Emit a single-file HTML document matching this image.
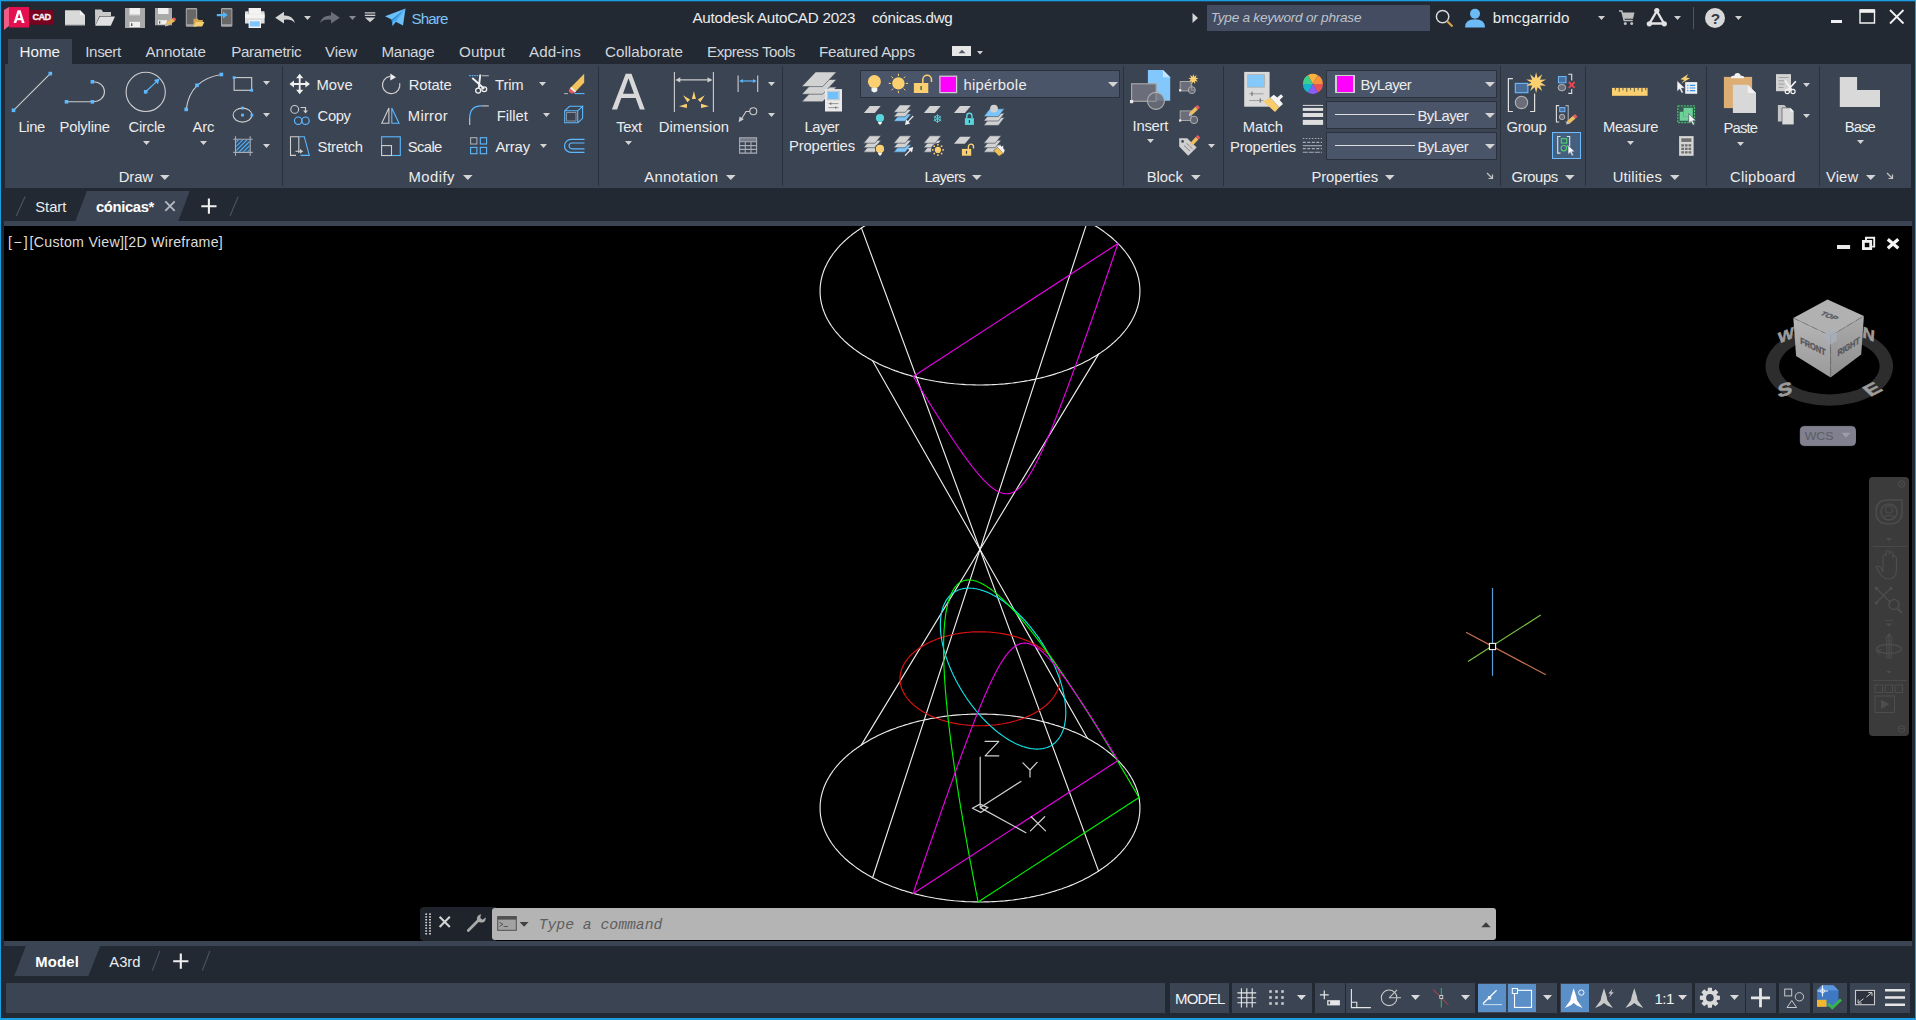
<!DOCTYPE html>
<html><head><meta charset="utf-8"><title>Autodesk AutoCAD 2023 - cónicas.dwg</title>
<style>
html,body{margin:0;padding:0;}
body{width:1916px;height:1020px;overflow:hidden;background:#222933;position:relative;font-family:"Liberation Sans",sans-serif;}
.t{position:absolute;white-space:pre;}
.b{position:absolute;display:block;overflow:visible;}
</style></head><body>

<div class="b" style="left:0px;top:0px;width:1916px;height:1px;background:#1a9ee0;"></div>
<div class="b" style="left:0px;top:1px;width:1916px;height:1px;background:#1f4a6c;"></div>
<div class="b" style="left:0px;top:0px;width:1px;height:1020px;background:#1a9ee0;"></div>
<div class="b" style="left:1915px;top:0px;width:1px;height:1020px;background:#1a9ee0;"></div>
<div class="b" style="left:0px;top:1018px;width:1916px;height:2px;background:#1a9ee0;"></div>
<svg class="b" style="left:3px;top:5px;" width="54" height="26" viewBox="0 0 54 26">
<path d="M1 5 L6 2 L6 21 L1 25Z" fill="#ee5d86"/>
<rect x="6" y="2" width="20" height="20.5" fill="#e51050"/>
<rect x="26" y="5" width="25" height="14.7" fill="#78021f"/>
<path d="M10.6 18 L14.6 5.3 H17.6 L21.6 18 H18.9 L18.1 15.2 H14.1 L13.3 18Z M14.7 13.1 H17.5 L16.1 8.2Z" fill="#fff"/>
</svg>
<div class="t" style="left:32.50px;top:12.00px;line-height:11px;font-size:9.2px;letter-spacing:-0.644px;color:#f6eef0;font-weight:bold;font-style:normal;font-family:'Liberation Sans', sans-serif;-webkit-text-stroke:0.35px #f6eef0;">CAD</div>
<svg class="b" style="left:64px;top:9px;" width="22" height="18" viewBox="0 0 22 18"><path d="M1 1.2 H16 L21 6.2 V16.3 H1Z" fill="#d9d9d9"/><path d="M16 1.2 V6.2 H21Z" fill="#f4f4f4"/><path d="M1 15.3H21V16.3H1Z" fill="#b5b5b5"/></svg>
<svg class="b" style="left:94px;top:8px;" width="22" height="19" viewBox="0 0 22 19"><path d="M1 1.5 H7.5 L9 4 H17 V8 H5.5 L1.2 17.5Z" fill="#c9c9c9"/><path d="M5.8 8.6 H21 L16.8 17.8 H1.2Z" fill="#e0e0e0"/></svg>
<svg class="b" style="left:124px;top:7px;" width="22" height="22" viewBox="0 0 22 22"><path d="M1 1H21V21H1Z" fill="#a9a9a9"/><rect x="5.5" y="1" width="10.5" height="7.2" fill="#f0f0f0"/><rect x="5.5" y="7.2" width="10.5" height="1" fill="#d0d0d0"/><rect x="5.5" y="14.8" width="10.5" height="5.2" fill="#efefef"/><rect x="7" y="16.3" width="1.4" height="2.7" fill="#555"/></svg>
<svg class="b" style="left:154px;top:7px;" width="23" height="22" viewBox="0 0 23 22"><path d="M1 1H18V18.3H1Z" fill="#a9a9a9"/><rect x="4" y="1" width="10.5" height="6" fill="#f0f0f0"/><rect x="4" y="13.2" width="9" height="4.2" fill="#efefef"/><rect x="5" y="14.3" width="1.3" height="2.3" fill="#555"/><path d="M11.2 19.2 L12.2 15.6 L18.6 11.3 L21.2 13.9 L14.7 18.2Z" fill="#e9b85c"/><path d="M18.2 11.6 L19.6 10.6 Q21.5 10.3 22 12.6 L21 13.9Z" fill="#ee5b5b"/><path d="M11 19.5 L12.1 16 L14.4 18.4Z" fill="#bdbdbd"/></svg>
<svg class="b" style="left:185px;top:7px;" width="21" height="22" viewBox="0 0 21 22"><rect x="0.8" y="1" width="11.4" height="18.8" rx="1.3" fill="#a5a5a5"/><rect x="1.8" y="2.4" width="9.4" height="14.8" fill="#686868"/><path d="M8.5 11.8 H12.8 L13.8 13 H17.8 V15 H10.5 L8.5 19.3Z" fill="#d6a84e"/><path d="M10.5 15 H19.3 L17.2 19.6 H8.4Z" fill="#f5cf74"/></svg>
<svg class="b" style="left:216px;top:7px;" width="18" height="22" viewBox="0 0 18 22"><rect x="5" y="1" width="11.4" height="18.8" rx="1.3" fill="#a5a5a5"/><rect x="6" y="2.4" width="9.4" height="14.8" fill="#686868"/><path d="M0.8 7 H7 V4.6 L11.8 8.1 L7 11.6 V9.2 H0.8Z" fill="#55b4f5"/></svg>
<svg class="b" style="left:244px;top:7px;" width="22" height="22" viewBox="0 0 22 22"><rect x="4.6" y="1" width="12.4" height="6" fill="#f2f2f2"/><path d="M1 5.2 Q1 4.2 2 4.2 H4.6 V7H17V4.2H19.6 Q20.6 4.200 20.6 5.2 V16.6 H1Z" fill="#dcdcdc"/><rect x="1" y="7.2" width="19.600" height="4" fill="#f3f3f3"/><rect x="4.6" y="13" width="12.4" height="8" fill="#f2f2f2"/><rect x="5.8" y="14.3" width="10" height="5.200" fill="#7fc4fa"/></svg>
<svg class="b" style="left:274px;top:10px;" width="23" height="15" viewBox="0 0 23 15"><path d="M1.2 7.7 L10 1.8 V5.6 Q18.5 5.2 21 13 Q17 8.6 10 9.8 V13.600Z" fill="#d4d4d4"/></svg>
<svg class="b" style="left:303.7px;top:15.8px;" width="7" height="4" viewBox="0 0 7 4"><path d="M0 0H7L3.5 4Z" fill="#cfcfcf"/></svg>
<svg class="b" style="left:318px;top:10px;" width="23" height="15" viewBox="0 0 23 15"><path d="M21.800 7.7 L13 1.8 V5.6 Q4.5 5.2 2 13 Q6 8.6 13 9.8 V13.600Z" fill="#6a6e79"/></svg>
<svg class="b" style="left:348.6px;top:15.8px;" width="7" height="4" viewBox="0 0 7 4"><path d="M0 0H7L3.5 4Z" fill="#858993"/></svg>
<svg class="b" style="left:364px;top:11px;" width="12" height="12" viewBox="0 0 12 12"><rect x="0.8" y="1.3" width="10.500" height="1.200" fill="#cfcfcf"/><rect x="0.8" y="3.700" width="10.500" height="1.300" fill="#cfcfcf"/><path d="M0.8 6.500 H11.300 L6.050 11.300Z" fill="#cfcfcf"/></svg>
<svg class="b" style="left:384px;top:7px;" width="23" height="20" viewBox="0 0 23 20"><path d="M1 9.3 L21.500 1.500 L19 18.500 L11.800 14.800 L8.600 19 L7.600 12.600Z" fill="#6cc0fa"/><path d="M7.600 12.600 L21.500 1.500 L9.300 14 L8.600 19Z" fill="#2f8fd6"/><path d="M9.300 14 L21.500 1.500 L11.800 14.800Z" fill="#4aa9ec"/></svg>
<div class="t" style="left:411.40px;top:9.50px;line-height:18px;font-size:15.2px;letter-spacing:-0.852px;color:#7cc3f7;font-weight:normal;font-style:normal;font-family:'Liberation Sans', sans-serif;">Share</div>
<div class="t" style="left:692.40px;top:9.20px;line-height:18px;font-size:15.2px;letter-spacing:-0.246px;color:#ececec;font-weight:normal;font-style:normal;font-family:'Liberation Sans', sans-serif;">Autodesk AutoCAD 2023</div>
<div class="t" style="left:872.00px;top:9.20px;line-height:18px;font-size:15.2px;letter-spacing:-0.277px;color:#ececec;font-weight:normal;font-style:normal;font-family:'Liberation Sans', sans-serif;">cónicas.dwg</div>
<svg class="b" style="left:1191px;top:12px;" width="8" height="12" viewBox="0 0 8 12"><path d="M1.5 1 L7 6 L1.5 11Z" fill="#d6d6d6"/></svg>
<div class="b" style="left:1207px;top:5px;width:223px;height:26px;background:#434c60;"></div>
<div class="t" style="left:1210.70px;top:10.20px;line-height:16px;font-size:13.6px;letter-spacing:-0.234px;color:#bfc3cb;font-weight:normal;font-style:italic;font-family:'Liberation Sans', sans-serif;">Type a keyword or phrase</div>
<svg class="b" style="left:1434px;top:8px;" width="20" height="20" viewBox="0 0 20 20"><circle cx="8.6" cy="8.6" r="6.2" fill="none" stroke="#dadada" stroke-width="1.500"/><path d="M13 13 L18.500 18.500" stroke="#d9a04c" stroke-width="2.200"/></svg>
<svg class="b" style="left:1464px;top:7px;" width="22" height="21" viewBox="0 0 22 21"><circle cx="11" cy="6.8" r="5" fill="#6cbbf7"/><path d="M1 20.500 Q1 12.300 11 12.300 Q21 12.300 21 20.500Z" fill="#6cbbf7"/></svg>
<div class="t" style="left:1492.70px;top:9.40px;line-height:18px;font-size:15.2px;letter-spacing:0.087px;color:#ececec;font-weight:normal;font-style:normal;font-family:'Liberation Sans', sans-serif;">bmcgarrido</div>
<svg class="b" style="left:1597.5px;top:15.600000000000001px;" width="7" height="4" viewBox="0 0 7 4"><path d="M0 0H7L3.5 4Z" fill="#cfcfcf"/></svg>
<svg class="b" style="left:1618px;top:9px;" width="18" height="18" viewBox="0 0 18 18"><path d="M1 2 H3.800 L6.200 11.500 H14.800" fill="none" stroke="#bdbdbd" stroke-width="1.500"/><path d="M4.300 3.500 H16.500 L15 9.800 H6Z" fill="#bdbdbd"/><circle cx="7.300" cy="14.600" r="1.500" fill="#bdbdbd"/><circle cx="13.700" cy="14.600" r="1.500" fill="#bdbdbd"/></svg>
<svg class="b" style="left:1646px;top:7px;" width="22" height="21" viewBox="0 0 22 21"><path d="M10.800 4 L3.500 16.500 H18 Z" fill="none" stroke="#e2e2e2" stroke-width="2.400" stroke-linejoin="round"/><circle cx="10.800" cy="3.600" r="2.600" fill="#e2e2e2"/><circle cx="3.300" cy="16.800" r="2.600" fill="#e2e2e2"/><circle cx="18.300" cy="16.800" r="2.600" fill="#e2e2e2"/></svg>
<svg class="b" style="left:1673.5px;top:15.600000000000001px;" width="7" height="4" viewBox="0 0 7 4"><path d="M0 0H7L3.5 4Z" fill="#cfcfcf"/></svg>
<div class="b" style="left:1693px;top:7px;width:1px;height:22px;background:#4d5566;"></div>
<svg class="b" style="left:1704px;top:7px;" width="22" height="22" viewBox="0 0 22 22"><circle cx="11" cy="11" r="10" fill="#d8d8d8"/></svg>
<div class="t" style="left:1710.80px;top:9.10px;line-height:19px;font-size:15.5px;letter-spacing:-1.068px;color:#333a46;font-weight:bold;font-style:normal;font-family:'Liberation Sans', sans-serif;">?</div>
<svg class="b" style="left:1734.5px;top:15.600000000000001px;" width="7" height="4" viewBox="0 0 7 4"><path d="M0 0H7L3.5 4Z" fill="#cfcfcf"/></svg>
<div class="b" style="left:1831px;top:20px;width:11px;height:3px;background:#f0f0f0;"></div>
<svg class="b" style="left:1859px;top:8px;" width="18" height="17" viewBox="0 0 18 17"><path d="M1 4 V15 H15.500 V4Z M1 2 H15.500" fill="none" stroke="#f0f0f0" stroke-width="1.400"/><rect x="0.300" y="1.300" width="15.900" height="2.900" fill="#f0f0f0"/></svg>
<svg class="b" style="left:1888px;top:8px;" width="18" height="18" viewBox="0 0 18 18"><path d="M2 2 L15.500 15.500 M15.500 2 L2 15.500" stroke="#f0f0f0" stroke-width="1.800"/></svg>
<div class="b" style="left:8px;top:39px;width:64px;height:26px;background:#3b4453;"></div>
<div class="t" style="left:19.60px;top:42.60px;line-height:18px;font-size:15.2px;letter-spacing:-0.037px;color:#f2f2f2;font-weight:normal;font-style:normal;font-family:'Liberation Sans', sans-serif;">Home</div>
<div class="t" style="left:85.30px;top:42.60px;line-height:18px;font-size:15.2px;letter-spacing:-0.419px;color:#d2d5da;font-weight:normal;font-style:normal;font-family:'Liberation Sans', sans-serif;">Insert</div>
<div class="t" style="left:145.40px;top:42.60px;line-height:18px;font-size:15.2px;letter-spacing:-0.032px;color:#d2d5da;font-weight:normal;font-style:normal;font-family:'Liberation Sans', sans-serif;">Annotate</div>
<div class="t" style="left:231.20px;top:42.60px;line-height:18px;font-size:15.2px;letter-spacing:-0.328px;color:#d2d5da;font-weight:normal;font-style:normal;font-family:'Liberation Sans', sans-serif;">Parametric</div>
<div class="t" style="left:325.00px;top:42.60px;line-height:18px;font-size:15.2px;letter-spacing:-0.168px;color:#d2d5da;font-weight:normal;font-style:normal;font-family:'Liberation Sans', sans-serif;">View</div>
<div class="t" style="left:381.50px;top:42.60px;line-height:18px;font-size:15.2px;letter-spacing:-0.322px;color:#d2d5da;font-weight:normal;font-style:normal;font-family:'Liberation Sans', sans-serif;">Manage</div>
<div class="t" style="left:459.00px;top:42.60px;line-height:18px;font-size:15.2px;letter-spacing:0.062px;color:#d2d5da;font-weight:normal;font-style:normal;font-family:'Liberation Sans', sans-serif;">Output</div>
<div class="t" style="left:529.00px;top:42.60px;line-height:18px;font-size:15.2px;letter-spacing:0.066px;color:#d2d5da;font-weight:normal;font-style:normal;font-family:'Liberation Sans', sans-serif;">Add-ins</div>
<div class="t" style="left:605.00px;top:42.60px;line-height:18px;font-size:15.2px;letter-spacing:0.024px;color:#d2d5da;font-weight:normal;font-style:normal;font-family:'Liberation Sans', sans-serif;">Collaborate</div>
<div class="t" style="left:707.00px;top:42.60px;line-height:18px;font-size:15.2px;letter-spacing:-0.488px;color:#d2d5da;font-weight:normal;font-style:normal;font-family:'Liberation Sans', sans-serif;">Express Tools</div>
<div class="t" style="left:819.00px;top:42.60px;line-height:18px;font-size:15.2px;letter-spacing:-0.221px;color:#d2d5da;font-weight:normal;font-style:normal;font-family:'Liberation Sans', sans-serif;">Featured Apps</div>
<div class="b" style="left:952px;top:46px;width:19px;height:10px;background:#e6e6e6;"></div>
<svg class="b" style="left:958px;top:49px;" width="8" height="5" viewBox="0 0 8 5"><path d="M0.500 4.300 L4 0.800 L7.500 4.300Z" fill="#555b66"/></svg>
<svg class="b" style="left:977.0px;top:50.55px;" width="6" height="3.5" viewBox="0 0 6 3.5"><path d="M0 0H6L3.0 3.5Z" fill="#cfcfcf"/></svg>
<div class="b" style="left:5px;top:64px;width:1906px;height:124px;background:#3b4453;"></div>
<div class="b" style="left:281.9px;top:66px;width:1.2px;height:120px;background:#2a313d;"></div>
<div class="b" style="left:597.9px;top:66px;width:1.2px;height:120px;background:#2a313d;"></div>
<div class="b" style="left:781.9px;top:66px;width:1.2px;height:120px;background:#2a313d;"></div>
<div class="b" style="left:1122.8000000000002px;top:66px;width:1.2px;height:120px;background:#2a313d;"></div>
<div class="b" style="left:1223.1000000000001px;top:66px;width:1.2px;height:120px;background:#2a313d;"></div>
<div class="b" style="left:1500.2px;top:66px;width:1.2px;height:120px;background:#2a313d;"></div>
<div class="b" style="left:1584.9px;top:66px;width:1.2px;height:120px;background:#2a313d;"></div>
<div class="b" style="left:1705.8000000000002px;top:66px;width:1.2px;height:120px;background:#2a313d;"></div>
<div class="b" style="left:1819.0px;top:66px;width:1.2px;height:120px;background:#2a313d;"></div>
<svg class="b" style="left:0px;top:0px;" width="300" height="170" viewBox="0 0 300 170"><path d="M13.500 110.300 L50.300 73.600" stroke="#cdcdcd" stroke-width="1.100" fill="none"/><rect x="11.70" y="108.50" width="3.6" height="3.6" fill="#5cb8ff"/><rect x="48.50" y="71.80" width="3.6" height="3.6" fill="#5cb8ff"/><path d="M66.500 101.800 H92.400 M92.400 101.800 C108.500 101.800 108.500 81.800 92.400 81.800" stroke="#cdcdcd" stroke-width="1.100" fill="none"/><rect x="64.70" y="100.00" width="3.6" height="3.6" fill="#5cb8ff"/><rect x="90.60" y="100.00" width="3.6" height="3.6" fill="#5cb8ff"/><rect x="90.60" y="80.00" width="3.6" height="3.6" fill="#5cb8ff"/><circle cx="145.700" cy="91.900" r="19.600" stroke="#cdcdcd" stroke-width="1.100" fill="none"/><path d="M145.700 91.800 L156.500 81.600" stroke="#5cb8ff" stroke-width="1.200"/><path d="M159.500 78.500 L158 84.300 L153.800 80.100Z" fill="#5cb8ff"/><rect x="143.90" y="90.00" width="3.6" height="3.6" fill="#5cb8ff"/><path d="M186.200 109.400 Q190 79.500 221.400 74.500" stroke="#cdcdcd" stroke-width="1.100" fill="none"/><rect x="184.40" y="107.60" width="3.6" height="3.6" fill="#5cb8ff"/><rect x="195.20" y="83.50" width="3.6" height="3.6" fill="#5cb8ff"/><rect x="219.60" y="72.70" width="3.6" height="3.6" fill="#5cb8ff"/><rect x="234.100" y="77.600" width="17.600" height="12.700" stroke="#cdcdcd" stroke-width="1.100" fill="none"/><rect x="232.70" y="76.20" width="2.8" height="2.8" fill="#5cb8ff"/><rect x="250.30" y="88.90" width="2.8" height="2.8" fill="#5cb8ff"/><ellipse cx="242.500" cy="115.100" rx="9.400" ry="7" stroke="#cdcdcd" stroke-width="1.100" fill="none"/><rect x="241.10" y="106.70" width="2.8" height="2.8" fill="#5cb8ff"/><rect x="241.10" y="113.70" width="2.8" height="2.8" fill="#5cb8ff"/><rect x="250.50" y="113.70" width="2.8" height="2.8" fill="#5cb8ff"/><defs><pattern id="hp" width="3" height="3" patternUnits="userSpaceOnUse" patternTransform="rotate(-45)"><rect width="3" height="3" fill="#34506f"/><rect width="3" height="1" fill="#5cb8ff"/></pattern></defs><rect x="236.200" y="140" width="13.300" height="11.700" fill="url(#hp)"/><path d="M235.500 136.300 V155.800 M250.200 136.300 V155.800 M233.300 139.300 H252.700 M233.300 152.400 H252.700" stroke="#a9adb5" stroke-width="1.100" fill="none"/></svg>
<svg class="b" style="left:262.6px;top:81.4px;" width="7" height="4" viewBox="0 0 7 4"><path d="M0 0H7L3.5 4Z" fill="#d4d4d4"/></svg>
<svg class="b" style="left:262.6px;top:112.7px;" width="7" height="4" viewBox="0 0 7 4"><path d="M0 0H7L3.5 4Z" fill="#d4d4d4"/></svg>
<svg class="b" style="left:262.6px;top:143.5px;" width="7" height="4" viewBox="0 0 7 4"><path d="M0 0H7L3.5 4Z" fill="#d4d4d4"/></svg>
<div class="t" style="left:18.60px;top:117.87px;line-height:18px;font-size:14.8px;letter-spacing:-0.470px;color:#ececec;font-weight:normal;font-style:normal;font-family:'Liberation Sans', sans-serif;">Line</div>
<div class="t" style="left:59.50px;top:117.87px;line-height:18px;font-size:14.8px;letter-spacing:-0.179px;color:#ececec;font-weight:normal;font-style:normal;font-family:'Liberation Sans', sans-serif;">Polyline</div>
<div class="t" style="left:128.50px;top:117.87px;line-height:18px;font-size:14.8px;letter-spacing:-0.221px;color:#ececec;font-weight:normal;font-style:normal;font-family:'Liberation Sans', sans-serif;">Circle</div>
<div class="t" style="left:192.50px;top:117.87px;line-height:18px;font-size:14.8px;letter-spacing:-0.133px;color:#ececec;font-weight:normal;font-style:normal;font-family:'Liberation Sans', sans-serif;">Arc</div>
<svg class="b" style="left:142.5px;top:140.9px;" width="7" height="4" viewBox="0 0 7 4"><path d="M0 0H7L3.5 4Z" fill="#d4d4d4"/></svg>
<svg class="b" style="left:199.5px;top:140.9px;" width="7" height="4" viewBox="0 0 7 4"><path d="M0 0H7L3.5 4Z" fill="#d4d4d4"/></svg>
<div class="t" style="left:118.80px;top:167.87px;line-height:18px;font-size:14.8px;letter-spacing:-0.109px;color:#ececec;font-weight:normal;font-style:normal;font-family:'Liberation Sans', sans-serif;">Draw</div>
<svg class="b" style="left:160.2px;top:174.9px;" width="9.6" height="5" viewBox="0 0 9.6 5"><path d="M0 0H9.6L4.8 5Z" fill="#d4d4d4"/></svg>
<svg class="b" style="left:0px;top:0px;" width="600" height="170" viewBox="0 0 600 170"><path d="M299.700 75.500 V92.500 M291.200 84 H308.200" stroke="#f0f0f0" stroke-width="1.800"/><path d="M299.700 73.700 L303.300 78.300 H296.100Z M299.700 94.300 L303.300 89.700 H296.100Z M289.400 84 L294 80.400 V87.600Z M310 84 L305.400 80.400 V87.600Z" fill="#f0f0f0"/><circle cx="294.700" cy="109.400" r="3.900" stroke="#cdcdcd" stroke-width="1.100" fill="none"/><path d="M300.500 107.500 H305.500 V111" stroke="#cdcdcd" stroke-width="1.200" fill="none"/><path d="M303 110.500 H308 L305.500 113.600Z" fill="#cdcdcd"/><circle cx="298.200" cy="120.700" r="3.700" stroke="#5cb8ff" stroke-width="1.200" fill="none"/><circle cx="305.500" cy="120.700" r="3.700" stroke="#5cb8ff" stroke-width="1.200" fill="none"/><path d="M298.800 153 V136.700 H290.500 V155.400 H296" stroke="#cdcdcd" stroke-width="1.100" fill="none"/><path d="M298.800 136.700 H304.300 L309.300 155.400 H300.500" stroke="#5cb8ff" stroke-width="1.100" fill="none"/><path d="M295.500 151.300 H300.500" stroke="#cdcdcd" stroke-width="1.100"/><path d="M300 148.900 L303.200 151.300 L300 153.700Z" fill="#cdcdcd"/><path d="M389.900 76.300 A8.700 8.700 0 1 0 399.700 83.200" stroke="#cdcdcd" stroke-width="1.200" fill="none"/><path d="M390.300 73.600 L396 77.300 L390.300 80.600Z" fill="#f0f0f0"/><path d="M388.900 108 V123.200 H381.800Z" stroke="#cdcdcd" stroke-width="1.100" fill="none"/><path d="M391.800 108 V123.200 H399Z" stroke="#5cb8ff" stroke-width="1.100" fill="none"/><rect x="381.600" y="136.800" width="18.700" height="18.700" stroke="#5cb8ff" stroke-width="1.100" fill="none"/><rect x="381.600" y="145.600" width="9.900" height="9.900" stroke="#cdcdcd" stroke-width="1.100" fill="#3b4453"/><path d="M469.200 75.700 H478.500" stroke="#5cb8ff" stroke-width="1.200" stroke-dasharray="1.500 1"/><path d="M482 75.700 H488.800" stroke="#a9adb5" stroke-width="1.200"/><path d="M480.300 74.500 L478.800 88 M472.300 78 L484.200 88.800" stroke="#f0f0f0" stroke-width="1.900" fill="none"/><circle cx="478.200" cy="90.600" r="2.500" stroke="#f0f0f0" stroke-width="1.300" fill="none"/><circle cx="484.300" cy="89.300" r="2.400" stroke="#f0f0f0" stroke-width="1.300" fill="none"/><path d="M469.700 125 V118" stroke="#cdcdcd" stroke-width="1.100"/><path d="M469.700 118 Q469.700 105.900 481.500 105.900" stroke="#5cb8ff" stroke-width="1.200" fill="none"/><path d="M481.500 105.900 H488.800" stroke="#cdcdcd" stroke-width="1.100"/><rect x="470.600" y="137.700" width="6.300" height="6.300" stroke="#a9adb5" stroke-width="1.100" fill="none"/><rect x="480.300" y="137.700" width="6.300" height="6.300" stroke="#5cb8ff" stroke-width="1.100" fill="none"/><rect x="470.600" y="147.400" width="6.300" height="6.300" stroke="#5cb8ff" stroke-width="1.100" fill="none"/><rect x="480.300" y="147.400" width="6.300" height="6.300" stroke="#5cb8ff" stroke-width="1.100" fill="none"/><path d="M570 88.300 L584.200 73.700 V82.500 L574.800 92.500Z" fill="#f2c25f"/><path d="M570 88.300 L574.800 92.500 L572.800 93.600 Q569 93.300 568.700 90Z" fill="#ee5a60"/><path d="M571.300 87 L576 91.200 L574.800 92.500 L570 88.300Z" fill="#f3f3f3"/><path d="M564.100 93.600 H568" stroke="#a9adb5" stroke-width="1.100"/><path d="M574.500 93.600 H584.500" stroke="#5cb8ff" stroke-width="1.100"/><path d="M564.700 110.800 H577.700 V122.800 H564.700Z M564.700 110.800 L569.500 106.300 H582.600 L577.700 110.800 M582.600 106.300 V118.300 L577.700 122.800" stroke="#5cb8ff" stroke-width="1.100" fill="none"/><path d="M566.500 112.500 H576 V121 H566.500Z" stroke="#8a909c" stroke-width="1" fill="none"/><path d="M584.500 139.400 H571 A6.500 6.500 0 0 0 571 152.400 H584.500 M584.500 143 H572 A2.900 2.900 0 0 0 572 148.800 H584.500" stroke="#5cb8ff" stroke-width="1.200" fill="none"/></svg>
<div class="t" style="left:316.40px;top:75.77px;line-height:18px;font-size:14.8px;letter-spacing:0.052px;color:#ececec;font-weight:normal;font-style:normal;font-family:'Liberation Sans', sans-serif;">Move</div>
<div class="t" style="left:317.60px;top:106.67px;line-height:18px;font-size:14.8px;letter-spacing:-0.388px;color:#ececec;font-weight:normal;font-style:normal;font-family:'Liberation Sans', sans-serif;">Copy</div>
<div class="t" style="left:317.60px;top:137.57px;line-height:18px;font-size:14.8px;letter-spacing:-0.241px;color:#ececec;font-weight:normal;font-style:normal;font-family:'Liberation Sans', sans-serif;">Stretch</div>
<div class="t" style="left:408.80px;top:75.77px;line-height:18px;font-size:14.8px;letter-spacing:-0.118px;color:#ececec;font-weight:normal;font-style:normal;font-family:'Liberation Sans', sans-serif;">Rotate</div>
<div class="t" style="left:407.80px;top:106.67px;line-height:18px;font-size:14.8px;letter-spacing:0.261px;color:#ececec;font-weight:normal;font-style:normal;font-family:'Liberation Sans', sans-serif;">Mirror</div>
<div class="t" style="left:407.80px;top:137.57px;line-height:18px;font-size:14.8px;letter-spacing:-0.624px;color:#ececec;font-weight:normal;font-style:normal;font-family:'Liberation Sans', sans-serif;">Scale</div>
<div class="t" style="left:495.10px;top:75.77px;line-height:18px;font-size:14.8px;letter-spacing:-0.159px;color:#ececec;font-weight:normal;font-style:normal;font-family:'Liberation Sans', sans-serif;">Trim</div>
<div class="t" style="left:496.80px;top:106.67px;line-height:18px;font-size:14.8px;letter-spacing:-0.058px;color:#ececec;font-weight:normal;font-style:normal;font-family:'Liberation Sans', sans-serif;">Fillet</div>
<div class="t" style="left:495.40px;top:137.57px;line-height:18px;font-size:14.8px;letter-spacing:-0.172px;color:#ececec;font-weight:normal;font-style:normal;font-family:'Liberation Sans', sans-serif;">Array</div>
<svg class="b" style="left:538.5px;top:82.0px;" width="7" height="4" viewBox="0 0 7 4"><path d="M0 0H7L3.5 4Z" fill="#d4d4d4"/></svg>
<svg class="b" style="left:542.5px;top:112.6px;" width="7" height="4" viewBox="0 0 7 4"><path d="M0 0H7L3.5 4Z" fill="#d4d4d4"/></svg>
<svg class="b" style="left:540.4px;top:143.8px;" width="7" height="4" viewBox="0 0 7 4"><path d="M0 0H7L3.5 4Z" fill="#d4d4d4"/></svg>
<div class="t" style="left:408.50px;top:167.87px;line-height:18px;font-size:14.8px;letter-spacing:0.468px;color:#ececec;font-weight:normal;font-style:normal;font-family:'Liberation Sans', sans-serif;">Modify</div>
<svg class="b" style="left:462.59999999999997px;top:174.9px;" width="9.6" height="5" viewBox="0 0 9.6 5"><path d="M0 0H9.6L4.8 5Z" fill="#d4d4d4"/></svg>
<svg class="b" style="left:0px;top:0px;" width="900" height="170" viewBox="0 0 900 170"><path d="M611.900 109.500 L625.700 73.800 H631.500 L644.800 109.500 H639.900 L635.700 97.900 H621.300 L617.100 109.500Z M628.500 78.300 L623 93.700 H634Z" fill="#d8d8d8" fill-rule="evenodd"/><path d="M674.400 72.100 V111.900 M713.400 72.100 V111.900 M677 79.900 H711" stroke="#cdcdcd" stroke-width="1.100" fill="none"/><path d="M675.300 79.900 L680.300 77.300 V82.500Z M712.500 79.900 L707.500 77.300 V82.500Z" fill="#cdcdcd"/><path d="M693.900 91 L695.900 99 H691.900Z M683 95.300 L690 99.500 L687.500 102.200Z M704.800 95.300 L697.800 99.500 L700.300 102.200Z M679 106.200 L686.900 103.700 V108Z M709 106.200 L701 103.700 V108Z" fill="#fbd071"/><path d="M738.100 75.500 V92.100 M757.700 75.500 V92.100" stroke="#cdcdcd" stroke-width="1.100"/><path d="M741 81 H755" stroke="#5cb8ff" stroke-width="1.200"/><path d="M739.300 81 L742.800 79 V83Z M756.500 81 L753 79 V83Z" fill="#5cb8ff"/><circle cx="753.300" cy="111.200" r="3.500" stroke="#cdcdcd" stroke-width="1.100" fill="none"/><path d="M749.800 111.500 H746 L741.500 119" stroke="#cdcdcd" stroke-width="1.100" fill="none"/><path d="M738.600 122.300 L739.600 116.600 L743.800 119.200Z" fill="#cdcdcd"/><path d="M739.600 137.800 H756.600 V153.100 H739.600Z M739.600 141.800 H756.600 M739.600 145.600 H756.600 M739.600 149.400 H756.600 M745.300 141.800 V153.100 M751 141.800 V153.100" stroke="#a9adb5" stroke-width="1.100" fill="none"/><rect x="739.600" y="137.800" width="17" height="4" fill="#a9adb5" opacity="0.550"/><path d="M801.80 101.80 L815.60 87.10 H836.50 L822.70 101.80Z" fill="#d2d2d2" stroke="#3b4453" stroke-width="0.600"/><path d="M801.80 94.20 L815.60 79.50 H836.50 L822.70 94.20Z" fill="#d2d2d2" stroke="#3b4453" stroke-width="0.600"/><path d="M801.80 86.60 L815.60 71.90 H836.50 L822.70 86.60Z" fill="#d2d2d2" stroke="#3b4453" stroke-width="0.600"/><rect x="825" y="89.100" width="17" height="22.400" fill="#e9e9e9"/><rect x="828" y="91.800" width="10.500" height="7.300" fill="#6fc0fb"/><rect x="827.300" y="91.100" width="11.900" height="8.700" fill="none" stroke="#b9b9b9" stroke-width="0.800"/><path d="M828.500 103.600 H838.500 M828.500 107.600 H838.500" stroke="#8e8e8e" stroke-width="0.900"/><path d="M830.800 102.400 V104.800 M835.800 106.400 V108.800" stroke="#6e6e6e" stroke-width="1.100"/></svg>
<div class="t" style="left:616.30px;top:117.87px;line-height:18px;font-size:14.8px;letter-spacing:-0.411px;color:#ececec;font-weight:normal;font-style:normal;font-family:'Liberation Sans', sans-serif;">Text</div>
<svg class="b" style="left:624.7px;top:140.7px;" width="7" height="4" viewBox="0 0 7 4"><path d="M0 0H7L3.5 4Z" fill="#d4d4d4"/></svg>
<div class="t" style="left:658.80px;top:117.67px;line-height:18px;font-size:14.8px;letter-spacing:0.020px;color:#ececec;font-weight:normal;font-style:normal;font-family:'Liberation Sans', sans-serif;">Dimension</div>
<svg class="b" style="left:767.5px;top:81.7px;" width="7" height="4" viewBox="0 0 7 4"><path d="M0 0H7L3.5 4Z" fill="#d4d4d4"/></svg>
<svg class="b" style="left:767.5px;top:112.6px;" width="7" height="4" viewBox="0 0 7 4"><path d="M0 0H7L3.5 4Z" fill="#d4d4d4"/></svg>
<div class="t" style="left:644.30px;top:167.87px;line-height:18px;font-size:14.8px;letter-spacing:0.313px;color:#ececec;font-weight:normal;font-style:normal;font-family:'Liberation Sans', sans-serif;">Annotation</div>
<svg class="b" style="left:725.9000000000001px;top:174.9px;" width="9.6" height="5" viewBox="0 0 9.6 5"><path d="M0 0H9.6L4.8 5Z" fill="#d4d4d4"/></svg>
<div class="t" style="left:804.60px;top:117.67px;line-height:18px;font-size:14.8px;letter-spacing:-0.564px;color:#ececec;font-weight:normal;font-style:normal;font-family:'Liberation Sans', sans-serif;">Layer</div>
<div class="t" style="left:789.00px;top:137.47px;line-height:18px;font-size:14.8px;letter-spacing:-0.155px;color:#ececec;font-weight:normal;font-style:normal;font-family:'Liberation Sans', sans-serif;">Properties</div>
<div class="b" style="left:860px;top:70px;width:260px;height:28px;background:#2b323e;"></div>
<div class="b" style="left:861px;top:71px;width:258px;height:26px;background:#4b556a;"></div>
<svg class="b" style="left:0px;top:0px;" width="1130" height="170" viewBox="0 0 1130 170"><circle cx="874.4" cy="81.6" r="6.5" fill="#fbd071"/><path d="M871.48 87.77 H877.32 V91.02 Q874.40 93.95 871.48 91.02Z" fill="#f2f2f2"/><circle cx="898.4" cy="83.4" r="6.2" fill="#fbd071"/><path d="M905.80 83.40 L908.10 83.40" stroke="#fbd071" stroke-width="1.0"/><path d="M903.63 88.63 L905.26 90.26" stroke="#fbd071" stroke-width="1.0"/><path d="M898.40 90.80 L898.40 93.10" stroke="#fbd071" stroke-width="1.0"/><path d="M893.17 88.63 L891.54 90.26" stroke="#fbd071" stroke-width="1.0"/><path d="M891.00 83.40 L888.70 83.40" stroke="#fbd071" stroke-width="1.0"/><path d="M893.17 78.17 L891.54 76.54" stroke="#fbd071" stroke-width="1.0"/><path d="M898.40 76.00 L898.40 73.70" stroke="#fbd071" stroke-width="1.0"/><path d="M903.63 78.17 L905.26 76.54" stroke="#fbd071" stroke-width="1.0"/><path d="M922.83 83.00 V79.50 A4.32 4.32 0 0 1 931.47 79.50 V82.00" stroke="#fbd071" stroke-width="1.500" fill="none"/><rect x="913.9" y="83" width="14.4" height="10" fill="#fbd071"/><rect x="920.50" y="86.00" width="1.200" height="4.00" fill="#3b4453"/><rect x="939.300" y="75.600" width="17.900" height="17.600" fill="#d0d0d0"/><rect x="940.500" y="76.800" width="15.500" height="15.200" fill="#ff00ff"/><path d="M863.90 112.90 L869.80 105.90 H880.70 L874.80 112.90Z" fill="#d2d2d2"/><circle cx="880" cy="118" r="4.100" fill="#58d6dc"/><path d="M878.1 121.9 H881.9 V123.2 L880 125 L878.1 123.2Z" fill="#f4f4f4"/><path d="M893.70 121.30 L899.80 113.90 H911.30 L905.20 121.30Z" fill="#7cc5fb" stroke="#3b4453" stroke-width="0.600"/><path d="M893.70 116.80 L899.80 109.40 H911.30 L905.20 116.80Z" fill="#d2d2d2" stroke="#3b4453" stroke-width="0.600"/><path d="M893.70 112.30 L899.80 104.90 H911.30 L905.20 112.30Z" fill="#d2d2d2" stroke="#3b4453" stroke-width="0.600"/><path d="M913.200 116 L907.300 122.400" stroke="#e8e8e8" stroke-width="1.200"/><path d="M905 124.900 L906.200 119.600 L910.200 123.400Z" fill="#f0f0f0"/><path d="M923.90 112.90 L929.80 105.90 H940.70 L934.80 112.90Z" fill="#d2d2d2"/><g stroke="#58d6dc" stroke-width="0.900" fill="none"><path d="M937.500 114.300 V122.900 M933.800 116.400 L941.200 120.800 M933.800 120.800 L941.200 116.400"/><path d="M936.100 115.300 L937.500 116.500 L938.900 115.300 M936.100 121.900 L937.500 120.700 L938.900 121.900 M934 118.300 L935.600 117.500 L935.300 115.800 M941 118.300 L939.400 117.500 L939.700 115.800 M934 118.900 L935.600 119.700 L935.300 121.400 M941 118.900 L939.400 119.700 L939.700 121.400"/></g><path d="M954.00 112.90 L959.90 105.90 H970.80 L964.90 112.90Z" fill="#d2d2d2"/><path d="M966.800 118.200 V116 A2.600 2.700 0 0 1 972 116 V118.200" stroke="#58d6dc" stroke-width="1.400" fill="none"/><rect x="964.900" y="118.200" width="9" height="6.700" fill="#58d6dc"/><rect x="968.800" y="120" width="1.200" height="3" fill="#2d3a45"/><path d="M983.70 125.40 L989.80 117.60 H1004.50 L998.40 125.40Z" fill="#d2d2d2" stroke="#3b4453" stroke-width="0.600"/><path d="M983.70 121.00 L989.80 113.20 H1004.50 L998.40 121.00Z" fill="#d2d2d2" stroke="#3b4453" stroke-width="0.600"/><path d="M983.70 116.60 L989.80 108.80 H1004.50 L998.40 116.60Z" fill="#7cc5fb" stroke="#3b4453" stroke-width="0.600"/><circle cx="994" cy="108.600" r="3.900" fill="#d0d0d0"/><path d="M863.50 152.20 L869.60 144.80 H881.10 L875.00 152.20Z" fill="#d2d2d2" stroke="#3b4453" stroke-width="0.600"/><path d="M863.50 147.70 L869.60 140.30 H881.10 L875.00 147.70Z" fill="#d2d2d2" stroke="#3b4453" stroke-width="0.600"/><path d="M863.50 143.20 L869.60 135.80 H881.10 L875.00 143.20Z" fill="#d2d2d2" stroke="#3b4453" stroke-width="0.600"/><circle cx="880" cy="148.900" r="5" fill="#3b4453"/><circle cx="880" cy="148.9" r="4.100" fill="#fbd071"/><path d="M878.1 152.8 H881.9 V154.1 L880 155.9 L878.1 154.1Z" fill="#f4f4f4"/><path d="M893.70 152.20 L899.80 144.80 H911.30 L905.20 152.20Z" fill="#7cc5fb" stroke="#3b4453" stroke-width="0.600"/><path d="M893.70 147.70 L899.80 140.30 H911.30 L905.20 147.70Z" fill="#d2d2d2" stroke="#3b4453" stroke-width="0.600"/><path d="M893.70 143.20 L899.80 135.80 H911.30 L905.20 143.20Z" fill="#d2d2d2" stroke="#3b4453" stroke-width="0.600"/><path d="M905 155.700 L910.800 149.500" stroke="#e8e8e8" stroke-width="1.200"/><path d="M913.200 147 L912 152.500 L907.800 148.500Z" fill="#f0f0f0"/><path d="M923.60 152.20 L929.70 144.80 H941.20 L935.10 152.20Z" fill="#d2d2d2" stroke="#3b4453" stroke-width="0.600"/><path d="M923.60 147.70 L929.70 140.30 H941.20 L935.10 147.70Z" fill="#d2d2d2" stroke="#3b4453" stroke-width="0.600"/><path d="M923.60 143.20 L929.70 135.80 H941.20 L935.10 143.20Z" fill="#d2d2d2" stroke="#3b4453" stroke-width="0.600"/><circle cx="937.900" cy="149.900" r="7" fill="#3b4453"/><circle cx="937.900" cy="149.900" r="3.100" fill="#fbd071"/><rect x="942.30" y="149.10" width="1.600" height="1.600" fill="#fbd071"/><rect x="940.78" y="152.78" width="1.600" height="1.600" fill="#fbd071"/><rect x="937.10" y="154.30" width="1.600" height="1.600" fill="#fbd071"/><rect x="933.42" y="152.78" width="1.600" height="1.600" fill="#fbd071"/><rect x="931.90" y="149.10" width="1.600" height="1.600" fill="#fbd071"/><rect x="933.42" y="145.42" width="1.600" height="1.600" fill="#fbd071"/><rect x="937.10" y="143.90" width="1.600" height="1.600" fill="#fbd071"/><rect x="940.78" y="145.42" width="1.600" height="1.600" fill="#fbd071"/><path d="M954.00 143.80 L959.90 136.80 H970.80 L964.90 143.80Z" fill="#d2d2d2"/><path d="M968.400 148.900 V146.800 A2.550 2.700 0 0 1 973.500 146.800 V148.600" stroke="#fbd071" stroke-width="1.400" fill="none"/><rect x="961.900" y="148.900" width="9.300" height="6.800" fill="#fbd071"/><rect x="965.900" y="150.800" width="1.200" height="3" fill="#3b4453"/><path d="M983.70 152.20 L989.80 144.80 H1001.30 L995.20 152.20Z" fill="#d2d2d2" stroke="#3b4453" stroke-width="0.600"/><path d="M983.70 147.70 L989.80 140.30 H1001.30 L995.20 147.70Z" fill="#d2d2d2" stroke="#3b4453" stroke-width="0.600"/><path d="M983.70 143.20 L989.80 135.80 H1001.30 L995.20 143.20Z" fill="#d2d2d2" stroke="#3b4453" stroke-width="0.600"/><path d="M993.500 150.500 L997.800 147.300 L1003.300 153.500 L999 156.300Z" fill="#f0c050" stroke="#3b4453" stroke-width="0.500"/><path d="M997.800 147.300 L1000.300 145.300 L1001.500 146.800 L1003.300 145.500 L1003.200 148.300 L1004.800 150.300 L1003.300 153.500Z" fill="#f4f4f4"/></svg>
<div class="t" style="left:963.50px;top:75.97px;line-height:18px;font-size:14.8px;letter-spacing:0.279px;color:#ececec;font-weight:normal;font-style:normal;font-family:'Liberation Sans', sans-serif;">hipérbole</div>
<svg class="b" style="left:1107.9px;top:81.9px;" width="10" height="5" viewBox="0 0 10 5"><path d="M0 0H10L5.0 5Z" fill="#d4d4d4"/></svg>
<div class="t" style="left:924.40px;top:167.87px;line-height:18px;font-size:14.8px;letter-spacing:-0.637px;color:#ececec;font-weight:normal;font-style:normal;font-family:'Liberation Sans', sans-serif;">Layers</div>
<svg class="b" style="left:972.4000000000001px;top:174.9px;" width="9.6" height="5" viewBox="0 0 9.6 5"><path d="M0 0H9.6L4.8 5Z" fill="#d4d4d4"/></svg>
<svg class="b" style="left:0px;top:0px;" width="1400" height="170" viewBox="0 0 1400 170"><path d="M1147.900 70 H1163 L1170.200 77.300 V100.700 H1147.900Z" fill="#82c8fc"/><path d="M1163 70 V77.300 H1170.200Z" fill="#c4e5fe"/><rect x="1131.600" y="83.800" width="24.600" height="17.500" fill="#6b6e7a" stroke="#a6a6a6" stroke-width="1.200"/><circle cx="1155.900" cy="100.900" r="8.500" fill="#6b6e7a" fill-opacity="0.850" stroke="#b0b0b0" stroke-width="1.100"/><path d="M1147.400 101.300 H1156.200 V92.400" stroke="#a6a6a6" stroke-width="1" fill="none" opacity="0.700"/><rect x="1130" y="100" width="3.200" height="3.200" fill="#e8e8e8"/><rect x="1180.200" y="81.500" width="11" height="9.400" fill="#6b6e7a" stroke="#a6a6a6" stroke-width="1"/><circle cx="1191.800" cy="90.100" r="3.500" fill="#6b6e7a" fill-opacity="0.800" stroke="#b0b0b0" stroke-width="1"/><path d="M1191.800 83.500 V90.100 H1195" stroke="#a6a6a6" stroke-width="0.800" fill="none"/><rect x="1179" y="89.200" width="2.200" height="2.200" fill="#e8e8e8"/><polygon points="1193.40,73.90 1194.29,76.66 1196.74,75.12 1195.65,77.80 1198.52,78.20 1195.96,79.55 1197.90,81.70 1195.07,81.09 1195.18,83.99 1193.40,81.70 1191.62,83.99 1191.73,81.09 1188.90,81.70 1190.84,79.55 1188.28,78.20 1191.15,77.80 1190.06,75.12 1192.51,76.66" fill="#fbd071"/><rect x="1180.200" y="110.900" width="11" height="9.600" fill="#6b6e7a" stroke="#a6a6a6" stroke-width="1"/><circle cx="1194" cy="119.900" r="3.700" fill="#6b6e7a" fill-opacity="0.800" stroke="#b0b0b0" stroke-width="1"/><rect x="1179" y="119.400" width="2.200" height="2.200" fill="#e8e8e8"/><path d="M1188.60 116.00 L1192.15 115.05 L1189.63 112.47Z" fill="#c9c9c9"/><path d="M1192.15 115.05 L1197.86 109.45 L1195.34 106.87 L1189.63 112.47Z" fill="#efbf5e"/><path d="M1197.86 109.45 L1199.86 107.49 L1197.34 104.91 L1195.34 106.87Z" fill="#ee5a60"/><path d="M1179.200 138.200 H1187.200 L1196.700 147.500 L1188.200 155.800 L1179.200 146.500Z" fill="#cfcfcf"/><circle cx="1182.600" cy="141.400" r="1.300" fill="#3b4453"/><path d="M1184 145.500 L1190 151 M1186.500 143.300 L1192.500 148.800" stroke="#7a7a7a" stroke-width="0.900"/><path d="M1189.30 146.50 L1192.81 145.42 L1190.20 142.94Z" fill="#c9c9c9"/><path d="M1192.81 145.42 L1198.37 139.57 L1195.77 137.09 L1190.20 142.94Z" fill="#efbf5e"/><path d="M1198.37 139.57 L1200.30 137.54 L1197.70 135.06 L1195.77 137.09Z" fill="#ee5a60"/><rect x="1244.200" y="71.900" width="25.400" height="34.800" fill="#dadada"/><rect x="1247.700" y="74.600" width="16.800" height="12.600" fill="#84c9fb" stroke="#b0b0b0" stroke-width="0.800"/><path d="M1249 93.800 H1263.500 M1249 100.500 H1263.500" stroke="#9a9a9a" stroke-width="0.900"/><path d="M1252 91.800 V95.800 M1260.300 98.500 V102.500" stroke="#7a7a7a" stroke-width="1.400"/><path d="M1263.300 101.500 L1270.300 97.600 L1279.300 107.300 L1275 112 Z" fill="#f7cd6c"/><path d="M1270.300 97.600 L1273.800 94.800 L1277.300 97.500 L1281 94.200 L1283.200 96.600 L1279.700 100 L1283 104 L1279.300 107.300Z" fill="#f3f3f3"/><path d="M1312.9 83.9 L1307.90 75.24 A10 10 0 0 1 1317.90 75.24Z" fill="#fbb040"/><path d="M1312.9 83.9 L1317.90 75.24 A10 10 0 0 1 1322.90 83.90Z" fill="#f7933a"/><path d="M1312.9 83.9 L1322.90 83.90 A10 10 0 0 1 1317.90 92.56Z" fill="#e65555"/><path d="M1312.9 83.9 L1317.90 92.56 A10 10 0 0 1 1307.90 92.56Z" fill="#8b5cf6"/><path d="M1312.9 83.9 L1307.90 92.56 A10 10 0 0 1 1302.90 83.90Z" fill="#14b4cc"/><path d="M1312.9 83.9 L1302.90 83.90 A10 10 0 0 1 1307.90 75.24Z" fill="#3fce8c"/><rect x="1302.800" y="104.900" width="20.300" height="1" fill="#dedede"/><rect x="1302.800" y="107.900" width="20.300" height="3" fill="#dedede"/><rect x="1302.800" y="113" width="20.300" height="4" fill="#dedede"/><rect x="1302.800" y="119.900" width="20.300" height="5" fill="#dedede"/><g stroke="#a9adb5" stroke-width="1.100"><path d="M1302.800 138.500 H1322" stroke-dasharray="1.500 1.500"/><path d="M1302.800 142.400 H1322" stroke-dasharray="3 1.500"/><path d="M1302.800 145.700 H1322"/><path d="M1302.800 148.600 H1322" stroke-dasharray="3 1.500"/><path d="M1302.800 152.200 H1322" stroke-dasharray="5 1"/></g></svg>
<div class="t" style="left:1132.60px;top:116.87px;line-height:18px;font-size:14.8px;letter-spacing:-0.269px;color:#ececec;font-weight:normal;font-style:normal;font-family:'Liberation Sans', sans-serif;">Insert</div>
<svg class="b" style="left:1146.6px;top:138.7px;" width="7" height="4" viewBox="0 0 7 4"><path d="M0 0H7L3.5 4Z" fill="#d4d4d4"/></svg>
<svg class="b" style="left:1208.3px;top:143.7px;" width="7" height="4" viewBox="0 0 7 4"><path d="M0 0H7L3.5 4Z" fill="#d4d4d4"/></svg>
<div class="t" style="left:1146.70px;top:167.87px;line-height:18px;font-size:14.8px;letter-spacing:-0.018px;color:#ececec;font-weight:normal;font-style:normal;font-family:'Liberation Sans', sans-serif;">Block</div>
<svg class="b" style="left:1190.5px;top:174.9px;" width="9.6" height="5" viewBox="0 0 9.6 5"><path d="M0 0H9.6L4.8 5Z" fill="#d4d4d4"/></svg>
<div class="t" style="left:1242.80px;top:117.57px;line-height:18px;font-size:14.8px;letter-spacing:-0.021px;color:#ececec;font-weight:normal;font-style:normal;font-family:'Liberation Sans', sans-serif;">Match</div>
<div class="t" style="left:1229.90px;top:137.57px;line-height:18px;font-size:14.8px;letter-spacing:-0.125px;color:#ececec;font-weight:normal;font-style:normal;font-family:'Liberation Sans', sans-serif;">Properties</div>
<div class="b" style="left:1326px;top:70px;width:171px;height:28px;background:#2b323e;"></div>
<div class="b" style="left:1327px;top:71px;width:169px;height:26px;background:#4b556a;"></div>
<svg class="b" style="left:1484.5px;top:81.9px;" width="10" height="5" viewBox="0 0 10 5"><path d="M0 0H10L5.0 5Z" fill="#d4d4d4"/></svg>
<div class="b" style="left:1326px;top:101px;width:171px;height:28px;background:#2b323e;"></div>
<div class="b" style="left:1327px;top:102px;width:169px;height:26px;background:#4b556a;"></div>
<svg class="b" style="left:1484.5px;top:112.9px;" width="10" height="5" viewBox="0 0 10 5"><path d="M0 0H10L5.0 5Z" fill="#d4d4d4"/></svg>
<div class="b" style="left:1326px;top:132px;width:171px;height:28px;background:#2b323e;"></div>
<div class="b" style="left:1327px;top:133px;width:169px;height:26px;background:#4b556a;"></div>
<svg class="b" style="left:1484.5px;top:143.9px;" width="10" height="5" viewBox="0 0 10 5"><path d="M0 0H10L5.0 5Z" fill="#d4d4d4"/></svg>
<div class="b" style="left:1335.3px;top:74.5px;width:19.3px;height:18.8px;background:#d0d0d0;"></div>
<div class="b" style="left:1336.5px;top:75.7px;width:16.9px;height:16.4px;background:#ff00ff;"></div>
<div class="t" style="left:1360.40px;top:75.97px;line-height:18px;font-size:14.8px;letter-spacing:-0.485px;color:#ececec;font-weight:normal;font-style:normal;font-family:'Liberation Sans', sans-serif;">ByLayer</div>
<div class="b" style="left:1335.3px;top:113.9px;width:79.7px;height:1px;background:#dedede;"></div>
<div class="t" style="left:1417.50px;top:106.97px;line-height:18px;font-size:14.8px;letter-spacing:-0.513px;color:#ececec;font-weight:normal;font-style:normal;font-family:'Liberation Sans', sans-serif;">ByLayer</div>
<div class="b" style="left:1335.3px;top:144.9px;width:79.7px;height:1px;background:#dedede;"></div>
<div class="t" style="left:1417.50px;top:137.97px;line-height:18px;font-size:14.8px;letter-spacing:-0.513px;color:#ececec;font-weight:normal;font-style:normal;font-family:'Liberation Sans', sans-serif;">ByLayer</div>
<div class="t" style="left:1311.50px;top:167.87px;line-height:18px;font-size:14.8px;letter-spacing:-0.095px;color:#ececec;font-weight:normal;font-style:normal;font-family:'Liberation Sans', sans-serif;">Properties</div>
<svg class="b" style="left:1385.2px;top:174.9px;" width="9.6" height="5" viewBox="0 0 9.6 5"><path d="M0 0H9.6L4.8 5Z" fill="#d4d4d4"/></svg>
<svg class="b" style="left:1486px;top:172px;" width="8" height="8" viewBox="0 0 8 8"><path d="M1 1 L6 6 M2.500 6.500 H6.500 V2.500" stroke="#c4c4c4" stroke-width="1.200" fill="none"/></svg>
<div class="b" style="left:1552px;top:132px;width:29px;height:27px;background:#6cbcff;"></div>
<div class="b" style="left:1553px;top:133px;width:27px;height:25px;background:#45607f;"></div>
<svg class="b" style="left:0px;top:0px;" width="1916" height="170" viewBox="0 0 1916 170"><path d="M1512.9 78.7 H1508.4 V111.5 H1512.9" stroke="#e0e0e0" stroke-width="1.2" fill="none"/><path d="M1534.600 93.600 V111.500 H1530.100" stroke="#e0e0e0" stroke-width="1.200" fill="none"/><rect x="1515.300" y="83.400" width="12.600" height="9.300" fill="#4a6e99" stroke="#6cbcff" stroke-width="1.100"/><circle cx="1521.500" cy="102.400" r="6.200" fill="#6b6e7a" stroke="#b5b5b5" stroke-width="1.100"/><polygon points="1536.10,72.20 1537.58,78.03 1542.21,74.19 1539.98,79.78 1545.99,79.39 1540.90,82.60 1545.99,85.81 1539.98,85.42 1542.21,91.01 1537.58,87.17 1536.10,93.00 1534.62,87.17 1529.99,91.01 1532.22,85.42 1526.21,85.81 1531.30,82.60 1526.21,79.39 1532.22,79.78 1529.99,74.19 1534.62,78.03" fill="#fbd071"/><rect x="1558.400" y="76.600" width="7.600" height="6.200" fill="#4a6e99" stroke="#6cbcff" stroke-width="1"/><ellipse cx="1561.900" cy="87.600" rx="3.800" ry="3.300" fill="#6b6e7a" stroke="#b5b5b5" stroke-width="1"/><path d="M1568.300 74.300 H1571.700 V80.500 M1571.700 89 V93.400 H1568.300" stroke="#e0e0e0" stroke-width="1.100" fill="none"/><path d="M1568.800 82 L1574.600 87.800 M1574.600 82 L1568.800 87.800" stroke="#f0464f" stroke-width="1.800"/><path d="M1559.2 105.6 H1556.4 V122 H1559.2" stroke="#e0e0e0" stroke-width="1.1" fill="none"/><path d="M1565.4 105.6 H1568.2 V122 H1565.4" stroke="#a9adb5" stroke-width="1.1" fill="none"/><rect x="1559.700" y="107.600" width="5.200" height="4.100" fill="#4a6e99" stroke="#6cbcff" stroke-width="1"/><circle cx="1562.100" cy="116.900" r="2.700" fill="#6b6e7a" stroke="#b5b5b5" stroke-width="1"/><path d="M1566.00 124.50 L1569.59 123.71 L1567.19 121.03Z" fill="#c9c9c9"/><path d="M1569.59 123.71 L1575.41 118.51 L1573.01 115.82 L1567.19 121.03Z" fill="#efbf5e"/><path d="M1575.41 118.51 L1577.50 116.64 L1575.10 113.96 L1573.01 115.82Z" fill="#ee5a60"/><path d="M1560.5 136.5 H1557.7 V153.1 H1560.5" stroke="#e0e0e0" stroke-width="1.1" fill="none"/><path d="M1566.9 136.5 H1569.7 V146 H1566.9" stroke="#e0e0e0" stroke-width="1.1" fill="none"/><rect x="1561.300" y="138.700" width="5.400" height="4.400" fill="none" stroke="#4ccf6c" stroke-width="1.100"/><circle cx="1563.800" cy="148.200" r="2.700" fill="none" stroke="#4ccf6c" stroke-width="1.100"/><path d="M1568.00 145.00 L1568.00 154.41 L1570.25 152.45 L1571.92 155.98 L1573.49 155.29 L1571.82 151.76 L1574.86 151.76Z" fill="#f4f4f4" stroke="#45607f" stroke-width="0.600"/><rect x="1612" y="87.900" width="35.600" height="7.900" fill="#fbd071"/><rect x="1614.85" y="87.900" width="1.100" height="2.4" fill="#6f6848"/><rect x="1618.64" y="87.900" width="1.100" height="3.9" fill="#6f6848"/><rect x="1622.43" y="87.900" width="1.100" height="2.4" fill="#6f6848"/><rect x="1626.22" y="87.900" width="1.100" height="3.9" fill="#6f6848"/><rect x="1630.01" y="87.900" width="1.100" height="2.4" fill="#6f6848"/><rect x="1633.80" y="87.900" width="1.100" height="3.9" fill="#6f6848"/><rect x="1637.59" y="87.900" width="1.100" height="2.4" fill="#6f6848"/><rect x="1641.38" y="87.900" width="1.100" height="3.9" fill="#6f6848"/><rect x="1645.17" y="87.900" width="1.100" height="2.4" fill="#6f6848"/><rect x="1685.200" y="82.100" width="12" height="11.700" fill="#eef2f7"/><g stroke="#3a8fe0" stroke-width="1.100"><path d="M1689.800 85.400 H1695.200 M1689.800 88 H1695.200 M1689.800 90.600 H1695.200"/><path d="M1687.200 85.400 H1688.400 M1687.200 88 H1688.400 M1687.200 90.600 H1688.400"/></g><path d="M1688.300 74.100 L1680.500 79.300 L1684.300 80 L1681 83.400 L1690 78.200 L1686.200 77.500Z" fill="#fbd071"/><path d="M1677.00 80.40 L1677.00 91.44 L1679.64 89.14 L1681.60 93.28 L1683.44 92.48 L1681.48 88.34 L1685.05 88.34Z" fill="#f4f4f4" stroke="#3b4453" stroke-width="0.600"/><rect x="1677.800" y="105.900" width="16.800" height="16.800" fill="#2f6a52" fill-opacity="0.550" stroke="#4ccf6c" stroke-width="1" stroke-dasharray="2 1"/><rect x="1683.500" y="107.800" width="9.300" height="9" fill="#6fd19a"/><path d="M1679.700 111.800 H1683.500 V116.800 H1688.800 V120.800 H1679.700Z" fill="#6fd19a"/><path d="M1688.70 113.50 L1688.70 123.58 L1691.12 121.48 L1692.90 125.26 L1694.58 124.53 L1692.80 120.75 L1696.05 120.75Z" fill="#f4f4f4" stroke="#3b4453" stroke-width="0.600"/><rect x="1679.100" y="136.100" width="14.500" height="19.700" fill="#d6d6d6"/><rect x="1681.300" y="138.300" width="10.100" height="3.600" fill="#6e6e6e"/><rect x="1681.30" y="144.20" width="2.700" height="2.300" fill="#6e6e6e"/><rect x="1684.90" y="144.20" width="2.700" height="2.300" fill="#6e6e6e"/><rect x="1688.50" y="144.20" width="2.700" height="2.300" fill="#6e6e6e"/><rect x="1681.30" y="147.70" width="2.700" height="2.300" fill="#6e6e6e"/><rect x="1684.90" y="147.70" width="2.700" height="2.300" fill="#6e6e6e"/><rect x="1688.50" y="147.70" width="2.700" height="2.300" fill="#6e6e6e"/><rect x="1681.30" y="151.20" width="2.700" height="2.300" fill="#6e6e6e"/><rect x="1684.90" y="151.20" width="2.700" height="2.300" fill="#6e6e6e"/><rect x="1688.50" y="151.20" width="2.700" height="2.300" fill="#6e6e6e"/><rect x="1723.900" y="76.900" width="28.200" height="31.200" fill="#dcae73"/><path d="M1730.800 78.200 Q1730.800 75.800 1733.300 75.800 H1734.300 Q1734.800 73 1737.500 73 Q1740.200 73 1740.700 75.800 H1741.700 Q1744.200 75.800 1744.200 78.200Z" fill="#f2f2f2"/><path d="M1732.900 84.800 H1747.800 L1756 93 V113 H1732.900Z" fill="#d8d8d8"/><path d="M1747.800 84.800 V93 H1756Z" fill="#f1f1f1"/><rect x="1776" y="74.100" width="15" height="17.100" fill="#d2d2d2"/><path d="M1778.500 77.500 H1788.500 M1778.500 80.800 H1786 M1778.500 84.100 H1784.500 M1778.500 87.400 H1783.500" stroke="#9a9a9a" stroke-width="0.900"/><path d="M1784.700 80.300 L1791.700 89.800 M1795.800 81.300 L1788.300 89.800" stroke="#f4f4f4" stroke-width="1.700"/><circle cx="1787.300" cy="91.500" r="2.100" fill="none" stroke="#f4f4f4" stroke-width="1.200"/><circle cx="1793" cy="91.500" r="2.100" fill="none" stroke="#f4f4f4" stroke-width="1.200"/><path d="M1777.900 105.100 H1784.300 L1786.700 107.500 V121.500 H1777.900Z" fill="#c4c4c4"/><path d="M1782 107.800 H1790.300 L1794 111.500 V124.800 H1782Z" fill="#dadada" stroke="#3b4453" stroke-width="0.600"/><path d="M1790.300 107.800 V111.500 H1794Z" fill="#f4f4f4"/><path d="M1839.800 76.900 H1857.100 V90 H1880 V107 H1839.800Z" fill="#d9d9d9"/></svg>
<div class="t" style="left:1506.50px;top:117.57px;line-height:18px;font-size:14.8px;letter-spacing:-0.227px;color:#ececec;font-weight:normal;font-style:normal;font-family:'Liberation Sans', sans-serif;">Group</div>
<div class="t" style="left:1511.50px;top:167.87px;line-height:18px;font-size:14.8px;letter-spacing:-0.356px;color:#ececec;font-weight:normal;font-style:normal;font-family:'Liberation Sans', sans-serif;">Groups</div>
<svg class="b" style="left:1565.4px;top:174.9px;" width="9.6" height="5" viewBox="0 0 9.6 5"><path d="M0 0H9.6L4.8 5Z" fill="#d4d4d4"/></svg>
<div class="t" style="left:1603.00px;top:118.37px;line-height:18px;font-size:14.8px;letter-spacing:-0.369px;color:#ececec;font-weight:normal;font-style:normal;font-family:'Liberation Sans', sans-serif;">Measure</div>
<svg class="b" style="left:1626.5px;top:140.7px;" width="7" height="4" viewBox="0 0 7 4"><path d="M0 0H7L3.5 4Z" fill="#d4d4d4"/></svg>
<div class="t" style="left:1612.70px;top:167.87px;line-height:18px;font-size:14.8px;letter-spacing:0.189px;color:#ececec;font-weight:normal;font-style:normal;font-family:'Liberation Sans', sans-serif;">Utilities</div>
<svg class="b" style="left:1670.0px;top:174.9px;" width="9.6" height="5" viewBox="0 0 9.6 5"><path d="M0 0H9.6L4.8 5Z" fill="#d4d4d4"/></svg>
<div class="t" style="left:1723.60px;top:119.27px;line-height:18px;font-size:14.8px;letter-spacing:-0.869px;color:#ececec;font-weight:normal;font-style:normal;font-family:'Liberation Sans', sans-serif;">Paste</div>
<svg class="b" style="left:1736.6px;top:141.8px;" width="7" height="4" viewBox="0 0 7 4"><path d="M0 0H7L3.5 4Z" fill="#d4d4d4"/></svg>
<svg class="b" style="left:1802.6px;top:82.6px;" width="7" height="4" viewBox="0 0 7 4"><path d="M0 0H7L3.5 4Z" fill="#d4d4d4"/></svg>
<svg class="b" style="left:1802.6px;top:113.5px;" width="7" height="4" viewBox="0 0 7 4"><path d="M0 0H7L3.5 4Z" fill="#d4d4d4"/></svg>
<div class="t" style="left:1730.00px;top:167.87px;line-height:18px;font-size:14.8px;letter-spacing:0.250px;color:#ececec;font-weight:normal;font-style:normal;font-family:'Liberation Sans', sans-serif;">Clipboard</div>
<div class="t" style="left:1844.70px;top:118.37px;line-height:18px;font-size:14.8px;letter-spacing:-0.883px;color:#ececec;font-weight:normal;font-style:normal;font-family:'Liberation Sans', sans-serif;">Base</div>
<svg class="b" style="left:1856.6px;top:139.8px;" width="7" height="4" viewBox="0 0 7 4"><path d="M0 0H7L3.5 4Z" fill="#d4d4d4"/></svg>
<div class="t" style="left:1826.00px;top:167.87px;line-height:18px;font-size:14.8px;letter-spacing:0.097px;color:#ececec;font-weight:normal;font-style:normal;font-family:'Liberation Sans', sans-serif;">View</div>
<svg class="b" style="left:1866.1000000000001px;top:174.9px;" width="9.6" height="5" viewBox="0 0 9.6 5"><path d="M0 0H9.6L4.8 5Z" fill="#d4d4d4"/></svg>
<svg class="b" style="left:1886px;top:172px;" width="8" height="8" viewBox="0 0 8 8"><path d="M1 1 L6 6 M2.500 6.500 H6.500 V2.500" stroke="#c4c4c4" stroke-width="1.200" fill="none"/></svg>
<div class="b" style="left:4px;top:221px;width:1908px;height:5px;background:#3b4453;"></div>
<svg class="b" style="left:0px;top:0px;" width="300" height="230" viewBox="0 0 300 230"><path d="M75.300 221.500 L86.900 191 H189.700 L178.200 221.500Z" fill="#3b4453"/><path d="M16.300 215.900 L25.100 196.500 M230 215.900 L238.200 196.500" stroke="#485062" stroke-width="1.200"/><path d="M165.300 201.400 L174.700 210.800 M174.700 201.400 L165.300 210.800" stroke="#b4b8bf" stroke-width="1.900"/><path d="M208.900 198.600 V213.800 M201.300 206.200 H216.500" stroke="#f0f0f0" stroke-width="2.100"/></svg>
<div class="t" style="left:35.30px;top:198.07px;line-height:18px;font-size:14.8px;letter-spacing:-0.071px;color:#ececec;font-weight:normal;font-style:normal;font-family:'Liberation Sans', sans-serif;">Start</div>
<div class="t" style="left:96.00px;top:198.07px;line-height:18px;font-size:14.8px;letter-spacing:-0.360px;color:#ffffff;font-weight:bold;font-style:normal;font-family:'Liberation Sans', sans-serif;">cónicas*</div>
<div class="b" style="left:4px;top:226px;width:1908px;height:715px;background:#000000;"></div>
<div class="t" style="left:7.90px;top:233.58px;line-height:17px;font-size:14.2px;letter-spacing:0.155px;color:#dcdcdc;font-weight:normal;font-style:normal;font-family:'Liberation Sans', sans-serif;">[</div>
<div class="t" style="left:13.60px;top:233.58px;line-height:17px;font-size:14.2px;letter-spacing:0.607px;color:#dcdcdc;font-weight:normal;font-style:normal;font-family:'Liberation Sans', sans-serif;">−</div>
<div class="t" style="left:23.80px;top:233.58px;line-height:17px;font-size:14.2px;letter-spacing:0.055px;color:#dcdcdc;font-weight:normal;font-style:normal;font-family:'Liberation Sans', sans-serif;">]</div>
<div class="t" style="left:29.60px;top:233.58px;line-height:17px;font-size:14.2px;letter-spacing:0.254px;color:#dcdcdc;font-weight:normal;font-style:normal;font-family:'Liberation Sans', sans-serif;">[Custom View][2D Wireframe]</div>
<svg class="b" style="left:0px;top:0px;" width="1916" height="260" viewBox="0 0 1916 260"><rect x="1837" y="245" width="13.100" height="4" fill="#eaeaea"/><path d="M1866 240 V237.800 H1874.200 V246.600 H1872.100" fill="none" stroke="#f0f0f0" stroke-width="1.900"/><rect x="1863.400" y="241.400" width="7.300" height="7.200" fill="#000" stroke="#f0f0f0" stroke-width="2.800"/><path d="M1887.800 239.300 L1898.300 248.200 M1898.300 239.300 L1887.800 248.200" stroke="#f4f4f4" stroke-width="3.200"/></svg>
<svg class="b" style="left:0px;top:0px;" width="1916" height="1020" viewBox="0 0 1916 1020"><defs><clipPath id="vp"><rect x="4" y="226" width="1908" height="715"/></clipPath></defs><g clip-path="url(#vp)" fill="none" stroke-linecap="round" stroke-linejoin="round"><path d="M1098.6 871.1 L1100.4 869.8 L1102.2 868.6 L1104.0 867.3 L1105.8 866.1 L1107.5 864.8 L1109.1 863.4 L1110.8 862.1 L1112.3 860.8 L1113.9 859.4 L1115.4 858.0 L1116.9 856.6 L1118.3 855.2 L1119.7 853.8 L1121.0 852.3 L1122.3 850.9 L1123.6 849.4 L1124.8 848.0 L1125.9 846.5 L1127.1 845.0 L1128.1 843.4 L1129.2 841.9 L1130.1 840.4 L1131.1 838.8 L1132.0 837.3 L1132.8 835.7 L1133.6 834.2 L1134.4 832.6 L1135.1 831.0 L1135.7 829.4 L1136.4 827.8 L1136.9 826.2 L1137.4 824.6 L1137.9 823.0 L1138.3 821.3 L1138.7 819.7 L1139.0 818.1 L1139.3 816.5 L1139.5 814.8 L1139.7 813.2 L1139.8 811.5 L1139.9 809.9 L1139.9 808.3 L1139.9 806.6 L1139.9 805.0 L1139.7 803.3 L1139.6 801.7 L1139.4 800.1 L1139.1 798.4 L1138.8 796.8 L1138.5 795.2 L1138.0 793.6 L1137.6 791.9 L1137.1 790.3 L1136.5 788.7 L1135.9 787.1 L1135.3 785.5 L1134.6 783.9 L1133.9 782.4 L1133.1 780.8 L1132.3 779.2 L1131.4 777.7 L1130.5 776.1 L1129.5 774.6 L1128.5 773.0 L1127.4 771.5 L1126.3 770.0 L1125.2 768.5 L1124.0 767.0 L1122.7 765.6 L1121.4 764.1 L1120.1 762.7 L1118.7 761.2 L1117.3 759.8 L1115.9 758.4 L1114.4 757.0 L1112.9 755.7 L1111.3 754.3 L1109.7 753.0 L1108.0 751.7 L1106.3 750.4 L1104.6 749.1 L1102.8 747.8 L1101.0 746.6 L1099.2 745.3 L1097.3 744.1 L1095.4 742.9 L1093.4 741.7 L1091.4 740.6 L1089.4 739.5 L1087.4 738.3 L1085.3 737.3 L1083.2 736.2 L1081.0 735.1 L1078.8 734.1 L1076.6 733.1 L1074.4 732.1 L1072.1 731.2 L1069.8 730.2 L1067.5 729.3 L1065.1 728.5 L1062.8 727.6 L1060.4 726.8 L1057.9 725.9 L1055.5 725.2 L1053.0 724.4 L1050.5 723.7 L1048.0 722.9 L1045.5 722.3 L1042.9 721.6 L1040.3 721.0 L1037.7 720.4 L1035.1 719.8 L1032.5 719.2 L1029.9 718.7 L1027.2 718.2 L1024.5 717.7 L1021.8 717.3 L1019.1 716.9 L1016.4 716.5 L1013.7 716.1 L1011.0 715.8 L1008.2 715.5 L1005.5 715.2 L1002.7 715.0 L999.9 714.8 L997.2 714.6 L994.4 714.4 L991.6 714.3 L988.8 714.2 L986.0 714.1 L983.2 714.1 L980.5 714.0 L977.7 714.0 L974.9 714.1 L972.1 714.1 L969.3 714.2 L966.5 714.4 L963.7 714.5 L961.0 714.7 L958.2 714.9 L955.4 715.1 L952.7 715.4 L949.9 715.7 L947.2 716.0 L944.5 716.4 L941.7 716.8 L939.0 717.2 L936.3 717.6 L933.7 718.1 L931.0 718.5 L928.4 719.1 L925.7 719.6 L923.1 720.2 L920.5 720.8 L917.9 721.4 L915.4 722.0 L912.8 722.7 L910.3 723.4 L907.8 724.2 L905.3 724.9 L902.9 725.7 L900.4 726.5 L898.0 727.3 L895.6 728.2 L893.3 729.0 L890.9 729.9 L888.6 730.9 L886.4 731.8 L884.1 732.8 L881.9 733.8 L879.7 734.8 L877.5 735.8 L875.4 736.9 L873.3 738.0 L871.2 739.1 L869.2 740.2 L867.2 741.4 L865.3 742.5 L863.3 743.7 L861.4 744.9 L859.6 746.2 L857.8 747.4 L856.0 748.7 L854.2 749.9 L852.5 751.2 L850.9 752.6 L849.2 753.9 L847.7 755.2 L846.1 756.6 L844.6 758.0 L843.1 759.4 L841.7 760.8 L840.3 762.2 L839.0 763.7 L837.7 765.1 L836.4 766.6 L835.2 768.0 L834.1 769.5 L832.9 771.0 L831.9 772.6 L830.8 774.1 L829.9 775.6 L828.9 777.2 L828.0 778.7 L827.2 780.3 L826.4 781.8 L825.6 783.4 L824.9 785.0 L824.3 786.6 L823.6 788.2 L823.1 789.8 L822.6 791.4 L822.1 793.0 L821.7 794.7 L821.3 796.3 L821.0 797.9 L820.7 799.5 L820.5 801.2 L820.3 802.8 L820.2 804.5 L820.1 806.1 L820.1 807.7 L820.1 809.4 L820.1 811.0 L820.3 812.7 L820.4 814.3 L820.6 815.9 L820.9 817.6 L821.2 819.2 L821.5 820.8 L822.0 822.4 L822.4 824.1 L822.9 825.7 L823.5 827.3 L824.1 828.9 L824.7 830.5 L825.4 832.1 L826.1 833.6 L826.9 835.2 L827.7 836.8 L828.6 838.3 L829.5 839.9 L830.5 841.4 L831.5 843.0 L832.6 844.5 L833.7 846.0 L834.8 847.5 L836.0 849.0 L837.3 850.4 L838.6 851.9 L839.9 853.3 L841.3 854.8 L842.7 856.2 L844.1 857.6 L845.6 859.0 L847.1 860.3 L848.7 861.7 L850.3 863.0 L852.0 864.3 L853.7 865.6 L855.4 866.9 L857.2 868.2 L859.0 869.4 L860.8 870.7 L862.7 871.9 L864.6 873.1 L866.6 874.3 L868.6 875.4 L870.6 876.5 L872.6 877.7 L874.7 878.7 L876.8 879.8 L879.0 880.9 L881.2 881.9 L883.4 882.9 L885.6 883.9 L887.9 884.8 L890.2 885.8 L892.5 886.7 L894.9 887.5 L897.2 888.4 L899.6 889.2 L902.1 890.1 L904.5 890.8 L907.0 891.6 L909.5 892.3 L912.0 893.1 L914.5 893.7 L917.1 894.4 L919.7 895.0 L922.3 895.6 L924.9 896.2 L927.5 896.8 L930.1 897.3 L932.8 897.8 L935.5 898.3 L938.2 898.7 L940.9 899.1 L943.6 899.5 L946.3 899.9 L949.0 900.2 L951.8 900.5 L954.5 900.8 L957.3 901.0 L960.1 901.2 L962.8 901.4 L965.6 901.6 L968.4 901.7 L971.2 901.8 L974.0 901.9 L976.8 901.9 L979.5 902.0 L982.3 902.0 L985.1 901.9 L987.9 901.9 L990.7 901.8 L993.5 901.6 L996.3 901.5 L999.0 901.3 L1001.8 901.1 L1004.6 900.9 L1007.3 900.6 L1010.1 900.3 L1012.8 900.0 L1015.5 899.6 L1018.3 899.2 L1021.0 898.8 L1023.7 898.4 L1026.3 897.9 L1029.0 897.5 L1031.6 896.9 L1034.3 896.4 L1036.9 895.8 L1039.5 895.2 L1042.1 894.6 L1044.6 894.0 L1047.2 893.3 L1049.7 892.6 L1052.2 891.8 L1054.7 891.1 L1057.1 890.3 L1059.6 889.5 L1062.0 888.7 L1064.4 887.8 L1066.7 887.0 L1069.1 886.1 L1071.4 885.1 L1073.6 884.2 L1075.9 883.2 L1078.1 882.2 L1080.3 881.2 L1082.5 880.2 L1084.6 879.1 L1086.7 878.0 L1088.8 876.9 L1090.8 875.8 L1092.8 874.6 L1094.7 873.5 L1096.7 872.3 L1098.6 871.1Z" stroke="#ececec" stroke-width="1.15"/><path d="M1098.6 354.1 L1100.4 352.9 L1102.2 351.6 L1104.0 350.4 L1105.8 349.1 L1107.5 347.8 L1109.1 346.5 L1110.8 345.1 L1112.3 343.8 L1113.9 342.4 L1115.4 341.0 L1116.9 339.6 L1118.3 338.2 L1119.7 336.8 L1121.0 335.4 L1122.3 333.9 L1123.6 332.4 L1124.8 331.0 L1125.9 329.5 L1127.1 328.0 L1128.1 326.5 L1129.2 324.9 L1130.1 323.4 L1131.1 321.9 L1132.0 320.3 L1132.8 318.7 L1133.6 317.2 L1134.4 315.6 L1135.1 314.0 L1135.7 312.4 L1136.4 310.8 L1136.9 309.2 L1137.4 307.6 L1137.9 306.0 L1138.3 304.3 L1138.7 302.7 L1139.0 301.1 L1139.3 299.5 L1139.5 297.8 L1139.7 296.2 L1139.8 294.6 L1139.9 292.9 L1139.9 291.3 L1139.9 289.6 L1139.9 288.0 L1139.7 286.4 L1139.6 284.7 L1139.4 283.1 L1139.1 281.4 L1138.8 279.8 L1138.5 278.2 L1138.0 276.6 L1137.6 275.0 L1137.1 273.3 L1136.5 271.7 L1135.9 270.1 L1135.3 268.5 L1134.6 266.9 L1133.9 265.4 L1133.1 263.8 L1132.3 262.2 L1131.4 260.7 L1130.5 259.1 L1129.5 257.6 L1128.5 256.1 L1127.4 254.5 L1126.3 253.0 L1125.2 251.5 L1124.0 250.1 L1122.7 248.6 L1121.4 247.1 L1120.1 245.7 L1118.7 244.3 L1117.3 242.8 L1115.9 241.4 L1114.4 240.1 L1112.9 238.7 L1111.3 237.3 L1109.7 236.0 L1108.0 234.7 L1106.3 233.4 L1104.6 232.1 L1102.8 230.8 L1101.0 229.6 L1099.2 228.3 L1097.3 227.1 L1095.4 225.9 L1093.4 224.8 L1091.4 223.6 L1089.4 222.5 L1087.4 221.4 L1085.3 220.3 L1083.2 219.2 L1081.0 218.1 L1078.8 217.1 L1076.6 216.1 L1074.4 215.1 L1072.1 214.2 L1069.8 213.3 L1067.5 212.3 L1065.1 211.5 L1062.8 210.6 L1060.4 209.8 L1057.9 209.0 L1055.5 208.2 L1053.0 207.4 L1050.5 206.7 L1048.0 206.0 L1045.5 205.3 L1042.9 204.6 L1040.3 204.0 L1037.7 203.4 L1035.1 202.8 L1032.5 202.2 L1029.9 201.7 L1027.2 201.2 L1024.5 200.8 L1021.8 200.3 L1019.1 199.9 L1016.4 199.5 L1013.7 199.1 L1011.0 198.8 L1008.2 198.5 L1005.5 198.2 L1002.7 198.0 L999.9 197.8 L997.2 197.6 L994.4 197.4 L991.6 197.3 L988.8 197.2 L986.0 197.1 L983.2 197.1 L980.5 197.0 L977.7 197.0 L974.9 197.1 L972.1 197.2 L969.3 197.3 L966.5 197.4 L963.7 197.5 L961.0 197.7 L958.2 197.9 L955.4 198.2 L952.7 198.4 L949.9 198.7 L947.2 199.0 L944.5 199.4 L941.7 199.8 L939.0 200.2 L936.3 200.6 L933.7 201.1 L931.0 201.6 L928.4 202.1 L925.7 202.6 L923.1 203.2 L920.5 203.8 L917.9 204.4 L915.4 205.1 L912.8 205.7 L910.3 206.4 L907.8 207.2 L905.3 207.9 L902.9 208.7 L900.4 209.5 L898.0 210.3 L895.6 211.2 L893.3 212.1 L890.9 213.0 L888.6 213.9 L886.4 214.8 L884.1 215.8 L881.9 216.8 L879.7 217.8 L877.5 218.9 L875.4 219.9 L873.3 221.0 L871.2 222.1 L869.2 223.2 L867.2 224.4 L865.3 225.5 L863.3 226.7 L861.4 227.9 L859.6 229.2 L857.8 230.4 L856.0 231.7 L854.2 232.9 L852.5 234.2 L850.9 235.6 L849.2 236.9 L847.7 238.2 L846.1 239.6 L844.6 241.0 L843.1 242.4 L841.7 243.8 L840.3 245.2 L839.0 246.7 L837.7 248.1 L836.4 249.6 L835.2 251.1 L834.1 252.5 L832.9 254.0 L831.9 255.6 L830.8 257.1 L829.9 258.6 L828.9 260.2 L828.0 261.7 L827.2 263.3 L826.4 264.9 L825.6 266.4 L824.9 268.0 L824.3 269.6 L823.6 271.2 L823.1 272.8 L822.6 274.4 L822.1 276.0 L821.7 277.7 L821.3 279.3 L821.0 280.9 L820.7 282.6 L820.5 284.2 L820.3 285.8 L820.2 287.5 L820.1 289.1 L820.1 290.7 L820.1 292.4 L820.1 294.0 L820.3 295.7 L820.4 297.3 L820.6 298.9 L820.9 300.6 L821.2 302.2 L821.5 303.8 L822.0 305.4 L822.4 307.1 L822.9 308.7 L823.5 310.3 L824.1 311.9 L824.7 313.5 L825.4 315.1 L826.1 316.7 L826.9 318.2 L827.7 319.8 L828.6 321.3 L829.5 322.9 L830.5 324.4 L831.5 326.0 L832.6 327.5 L833.7 329.0 L834.8 330.5 L836.0 332.0 L837.3 333.4 L838.6 334.9 L839.9 336.3 L841.3 337.8 L842.7 339.2 L844.1 340.6 L845.6 342.0 L847.1 343.3 L848.7 344.7 L850.3 346.0 L852.0 347.3 L853.7 348.7 L855.4 349.9 L857.2 351.2 L859.0 352.5 L860.8 353.7 L862.7 354.9 L864.6 356.1 L866.6 357.3 L868.6 358.4 L870.6 359.6 L872.6 360.7 L874.7 361.8 L876.8 362.8 L879.0 363.9 L881.2 364.9 L883.4 365.9 L885.6 366.9 L887.9 367.8 L890.2 368.8 L892.5 369.7 L894.9 370.6 L897.2 371.4 L899.6 372.3 L902.1 373.1 L904.5 373.9 L907.0 374.6 L909.5 375.3 L912.0 376.1 L914.5 376.7 L917.1 377.4 L919.7 378.0 L922.3 378.6 L924.9 379.2 L927.5 379.8 L930.1 380.3 L932.8 380.8 L935.5 381.3 L938.2 381.7 L940.9 382.1 L943.6 382.5 L946.3 382.9 L949.0 383.2 L951.8 383.5 L954.5 383.8 L957.3 384.0 L960.1 384.2 L962.8 384.4 L965.6 384.6 L968.4 384.7 L971.2 384.8 L974.0 384.9 L976.8 385.0 L979.5 385.0 L982.3 385.0 L985.1 384.9 L987.9 384.9 L990.7 384.8 L993.5 384.6 L996.3 384.5 L999.0 384.3 L1001.8 384.1 L1004.6 383.9 L1007.3 383.6 L1010.1 383.3 L1012.8 383.0 L1015.5 382.6 L1018.3 382.2 L1021.0 381.8 L1023.7 381.4 L1026.3 380.9 L1029.0 380.5 L1031.6 379.9 L1034.3 379.4 L1036.9 378.8 L1039.5 378.2 L1042.1 377.6 L1044.6 377.0 L1047.2 376.3 L1049.7 375.6 L1052.2 374.9 L1054.7 374.1 L1057.1 373.3 L1059.6 372.5 L1062.0 371.7 L1064.4 370.8 L1066.7 370.0 L1069.1 369.1 L1071.4 368.1 L1073.6 367.2 L1075.9 366.2 L1078.1 365.2 L1080.3 364.2 L1082.5 363.2 L1084.6 362.1 L1086.7 361.0 L1088.8 359.9 L1090.8 358.8 L1092.8 357.6 L1094.7 356.5 L1096.7 355.3 L1098.6 354.1Z" stroke="#ececec" stroke-width="1.15"/><path d="M1098.6 871.1 L861.4 227.9" stroke="#ececec" stroke-width="1.15"/><path d="M861.4 744.9 L1098.6 354.1" stroke="#ececec" stroke-width="1.15"/><path d="M1087.4 738.3 L872.6 360.7" stroke="#ececec" stroke-width="1.15"/><path d="M872.6 877.7 L1087.4 221.4" stroke="#ececec" stroke-width="1.15"/><path d="M1039.3 710.3 L1040.2 709.7 L1041.1 709.1 L1042.0 708.4 L1042.9 707.8 L1043.7 707.1 L1044.6 706.5 L1045.4 705.8 L1046.2 705.1 L1046.9 704.5 L1047.7 703.8 L1048.4 703.1 L1049.1 702.4 L1049.8 701.6 L1050.5 700.9 L1051.2 700.2 L1051.8 699.5 L1052.4 698.7 L1053.0 698.0 L1053.5 697.2 L1054.1 696.5 L1054.6 695.7 L1055.1 694.9 L1055.5 694.2 L1056.0 693.4 L1056.4 692.6 L1056.8 691.8 L1057.2 691.0 L1057.5 690.2 L1057.9 689.5 L1058.2 688.7 L1058.5 687.8 L1058.7 687.0 L1059.0 686.2 L1059.2 685.4 L1059.3 684.6 L1059.5 683.8 L1059.6 683.0 L1059.8 682.2 L1059.9 681.3 L1059.9 680.5 L1060.0 679.7 L1060.0 678.9 L1060.0 678.1 L1059.9 677.2 L1059.9 676.4 L1059.8 675.6 L1059.7 674.8 L1059.6 674.0 L1059.4 673.2 L1059.2 672.3 L1059.0 671.5 L1058.8 670.7 L1058.5 669.9 L1058.3 669.1 L1058.0 668.3 L1057.7 667.5 L1057.3 666.7 L1056.9 665.9 L1056.5 665.1 L1056.1 664.4 L1055.7 663.6 L1055.2 662.8 L1054.7 662.0 L1054.2 661.3 L1053.7 660.5 L1053.2 659.8 L1052.6 659.0 L1052.0 658.3 L1051.4 657.5 L1050.7 656.8 L1050.1 656.1 L1049.4 655.4 L1048.7 654.7 L1047.9 654.0 L1047.2 653.3 L1046.4 652.6 L1045.6 651.9 L1044.8 651.2 L1044.0 650.6 L1043.2 649.9 L1042.3 649.3 L1041.4 648.7 L1040.5 648.0 L1039.6 647.4 L1038.6 646.8 L1037.7 646.2 L1036.7 645.6 L1035.7 645.0 L1034.7 644.5 L1033.7 643.9 L1032.6 643.4 L1031.6 642.8 L1030.5 642.3 L1029.4 641.8 L1028.3 641.3 L1027.2 640.8 L1026.1 640.3 L1024.9 639.9 L1023.7 639.4 L1022.6 639.0 L1021.4 638.5 L1020.2 638.1 L1019.0 637.7 L1017.7 637.3 L1016.5 636.9 L1015.3 636.6 L1014.0 636.2 L1012.7 635.9 L1011.5 635.6 L1010.2 635.2 L1008.9 634.9 L1007.6 634.6 L1006.3 634.4 L1004.9 634.1 L1003.6 633.9 L1002.3 633.6 L1000.9 633.4 L999.6 633.2 L998.2 633.0 L996.8 632.8 L995.5 632.7 L994.1 632.5 L992.7 632.4 L991.4 632.2 L990.0 632.1 L988.6 632.0 L987.2 632.0 L985.8 631.9 L984.4 631.8 L983.0 631.8 L981.6 631.8 L980.2 631.8 L978.8 631.8 L977.4 631.8 L976.0 631.8 L974.6 631.9 L973.3 631.9 L971.9 632.0 L970.5 632.1 L969.1 632.2 L967.7 632.3 L966.3 632.5 L965.0 632.6 L963.6 632.8 L962.2 632.9 L960.9 633.1 L959.5 633.3 L958.2 633.6 L956.8 633.8 L955.5 634.0 L954.2 634.3 L952.9 634.6 L951.6 634.8 L950.3 635.1 L949.0 635.5 L947.7 635.8 L946.4 636.1 L945.1 636.5 L943.9 636.8 L942.7 637.2 L941.4 637.6 L940.2 638.0 L939.0 638.4 L937.8 638.8 L936.6 639.3 L935.5 639.7 L934.3 640.2 L933.2 640.7 L932.1 641.1 L930.9 641.6 L929.8 642.2 L928.8 642.7 L927.7 643.2 L926.7 643.7 L925.6 644.3 L924.6 644.9 L923.6 645.4 L922.6 646.0 L921.7 646.6 L920.7 647.2 L919.8 647.8 L918.9 648.4 L918.0 649.1 L917.1 649.7 L916.3 650.4 L915.4 651.0 L914.6 651.7 L913.8 652.4 L913.1 653.1 L912.3 653.7 L911.6 654.4 L910.9 655.1 L910.2 655.9 L909.5 656.6 L908.8 657.3 L908.2 658.0 L907.6 658.8 L907.0 659.5 L906.5 660.3 L905.9 661.0 L905.4 661.8 L904.9 662.6 L904.5 663.3 L904.0 664.1 L903.6 664.9 L903.2 665.7 L902.8 666.5 L902.5 667.3 L902.1 668.1 L901.8 668.9 L901.5 669.7 L901.3 670.5 L901.0 671.3 L900.8 672.1 L900.7 672.9 L900.5 673.7 L900.4 674.5 L900.2 675.3 L900.1 676.2 L900.1 677.0 L900.0 677.8 L900.0 678.6 L900.0 679.4 L900.1 680.3 L900.1 681.1 L900.2 681.9 L900.3 682.7 L900.4 683.5 L900.6 684.3 L900.8 685.2 L901.0 686.0 L901.2 686.8 L901.5 687.6 L901.7 688.4 L902.0 689.2 L902.3 690.0 L902.7 690.8 L903.1 691.6 L903.5 692.4 L903.9 693.1 L904.3 693.9 L904.8 694.7 L905.3 695.5 L905.8 696.2 L906.3 697.0 L906.8 697.7 L907.4 698.5 L908.0 699.2 L908.6 700.0 L909.3 700.7 L909.9 701.4 L910.6 702.1 L911.3 702.8 L912.1 703.5 L912.8 704.2 L913.6 704.9 L914.4 705.6 L915.2 706.3 L916.0 706.9 L916.8 707.6 L917.7 708.2 L918.6 708.9 L919.5 709.5 L920.4 710.1 L921.4 710.7 L922.3 711.3 L923.3 711.9 L924.3 712.5 L925.3 713.0 L926.3 713.6 L927.4 714.1 L928.4 714.7 L929.5 715.2 L930.6 715.7 L931.7 716.2 L932.8 716.7 L933.9 717.2 L935.1 717.6 L936.3 718.1 L937.4 718.5 L938.6 719.0 L939.8 719.4 L941.0 719.8 L942.3 720.2 L943.5 720.6 L944.7 720.9 L946.0 721.3 L947.3 721.6 L948.5 721.9 L949.8 722.3 L951.1 722.6 L952.4 722.9 L953.7 723.1 L955.1 723.4 L956.4 723.6 L957.7 723.9 L959.1 724.1 L960.4 724.3 L961.8 724.5 L963.2 724.7 L964.5 724.8 L965.9 725.0 L967.3 725.1 L968.6 725.3 L970.0 725.4 L971.4 725.5 L972.8 725.5 L974.2 725.6 L975.6 725.7 L977.0 725.7 L978.4 725.7 L979.8 725.7 L981.2 725.7 L982.6 725.7 L984.0 725.7 L985.4 725.6 L986.7 725.6 L988.1 725.5 L989.5 725.4 L990.9 725.3 L992.3 725.2 L993.7 725.0 L995.0 724.9 L996.4 724.7 L997.8 724.6 L999.1 724.4 L1000.5 724.2 L1001.8 724.0 L1003.2 723.7 L1004.5 723.5 L1005.8 723.2 L1007.1 722.9 L1008.4 722.7 L1009.7 722.4 L1011.0 722.1 L1012.3 721.7 L1013.6 721.4 L1014.9 721.0 L1016.1 720.7 L1017.3 720.3 L1018.6 719.9 L1019.8 719.5 L1021.0 719.1 L1022.2 718.7 L1023.4 718.2 L1024.5 717.8 L1025.7 717.3 L1026.8 716.8 L1027.9 716.4 L1029.1 715.9 L1030.2 715.3 L1031.2 714.8 L1032.3 714.3 L1033.3 713.8 L1034.4 713.2 L1035.4 712.6 L1036.4 712.1 L1037.4 711.5 L1038.3 710.9 L1039.3 710.3Z" stroke="#e01212" stroke-width="1.15"/><path d="M1052.1 745.0 L1052.7 744.5 L1053.4 744.0 L1054.0 743.5 L1054.7 743.0 L1055.3 742.5 L1055.9 741.9 L1056.5 741.3 L1057.0 740.7 L1057.6 740.0 L1058.1 739.4 L1058.6 738.7 L1059.1 738.0 L1059.6 737.3 L1060.1 736.5 L1060.5 735.8 L1061.0 735.0 L1061.4 734.2 L1061.8 733.4 L1062.1 732.5 L1062.5 731.7 L1062.8 730.8 L1063.2 729.9 L1063.5 729.0 L1063.7 728.0 L1064.0 727.1 L1064.3 726.1 L1064.5 725.1 L1064.7 724.1 L1064.9 723.1 L1065.1 722.0 L1065.2 721.0 L1065.4 719.9 L1065.5 718.8 L1065.6 717.7 L1065.7 716.6 L1065.7 715.4 L1065.8 714.3 L1065.8 713.1 L1065.8 712.0 L1065.8 710.8 L1065.7 709.6 L1065.7 708.4 L1065.6 707.1 L1065.5 705.9 L1065.4 704.6 L1065.3 703.4 L1065.1 702.1 L1064.9 700.8 L1064.8 699.5 L1064.5 698.2 L1064.3 696.9 L1064.1 695.6 L1063.8 694.3 L1063.5 692.9 L1063.2 691.6 L1062.9 690.2 L1062.6 688.9 L1062.2 687.5 L1061.9 686.2 L1061.5 684.8 L1061.1 683.4 L1060.6 682.0 L1060.2 680.6 L1059.7 679.2 L1059.3 677.9 L1058.8 676.5 L1058.2 675.1 L1057.7 673.7 L1057.2 672.3 L1056.6 670.9 L1056.0 669.4 L1055.4 668.0 L1054.8 666.6 L1054.2 665.2 L1053.6 663.8 L1052.9 662.4 L1052.2 661.0 L1051.5 659.6 L1050.8 658.2 L1050.1 656.9 L1049.4 655.5 L1048.6 654.1 L1047.9 652.7 L1047.1 651.3 L1046.3 650.0 L1045.5 648.6 L1044.7 647.2 L1043.9 645.9 L1043.1 644.5 L1042.2 643.2 L1041.3 641.9 L1040.5 640.6 L1039.6 639.2 L1038.7 637.9 L1037.8 636.6 L1036.9 635.4 L1035.9 634.1 L1035.0 632.8 L1034.1 631.6 L1033.1 630.3 L1032.1 629.1 L1031.2 627.9 L1030.2 626.7 L1029.2 625.5 L1028.2 624.3 L1027.2 623.1 L1026.2 622.0 L1025.2 620.9 L1024.1 619.7 L1023.1 618.6 L1022.1 617.5 L1021.0 616.5 L1020.0 615.4 L1018.9 614.3 L1017.8 613.3 L1016.8 612.3 L1015.7 611.3 L1014.6 610.3 L1013.5 609.4 L1012.5 608.4 L1011.4 607.5 L1010.3 606.6 L1009.2 605.7 L1008.1 604.9 L1007.0 604.0 L1005.9 603.2 L1004.8 602.4 L1003.7 601.6 L1002.7 600.8 L1001.6 600.1 L1000.5 599.3 L999.4 598.6 L998.3 598.0 L997.2 597.3 L996.1 596.7 L995.0 596.0 L993.9 595.4 L992.8 594.9 L991.8 594.3 L990.7 593.8 L989.6 593.3 L988.6 592.8 L987.5 592.3 L986.4 591.9 L985.4 591.5 L984.3 591.1 L983.3 590.7 L982.3 590.4 L981.2 590.1 L980.2 589.8 L979.2 589.5 L978.2 589.3 L977.2 589.0 L976.2 588.8 L975.2 588.7 L974.2 588.5 L973.3 588.4 L972.3 588.3 L971.3 588.2 L970.4 588.2 L969.5 588.1 L968.6 588.1 L967.7 588.2 L966.8 588.2 L965.9 588.3 L965.0 588.4 L964.1 588.5 L963.3 588.6 L962.4 588.8 L961.6 589.0 L960.8 589.2 L960.0 589.5 L959.2 589.7 L958.4 590.0 L957.7 590.3 L956.9 590.7 L956.2 591.0 L955.5 591.4 L954.8 591.8 L954.1 592.3 L953.4 592.7 L952.7 593.2 L952.1 593.7 L951.5 594.2 L950.8 594.8 L950.2 595.3 L949.7 595.9 L949.1 596.5 L948.5 597.2 L948.0 597.8 L947.5 598.5 L947.0 599.2 L946.5 599.9 L946.0 600.7 L945.6 601.4 L945.2 602.2 L944.8 603.0 L944.4 603.8 L944.0 604.7 L943.6 605.5 L943.3 606.4 L943.0 607.3 L942.7 608.2 L942.4 609.2 L942.1 610.1 L941.9 611.1 L941.6 612.1 L941.4 613.1 L941.2 614.1 L941.1 615.2 L940.9 616.2 L940.8 617.3 L940.6 618.4 L940.6 619.5 L940.5 620.6 L940.4 621.8 L940.4 622.9 L940.4 624.1 L940.3 625.3 L940.4 626.4 L940.4 627.6 L940.5 628.9 L940.5 630.1 L940.6 631.3 L940.7 632.6 L940.9 633.8 L941.0 635.1 L941.2 636.4 L941.4 637.7 L941.6 639.0 L941.8 640.3 L942.0 641.6 L942.3 642.9 L942.6 644.3 L942.9 645.6 L943.2 647.0 L943.5 648.3 L943.9 649.7 L944.3 651.1 L944.7 652.4 L945.1 653.8 L945.5 655.2 L945.9 656.6 L946.4 658.0 L946.9 659.4 L947.4 660.8 L947.9 662.2 L948.4 663.6 L949.0 665.0 L949.5 666.4 L950.1 667.8 L950.7 669.2 L951.3 670.6 L951.9 672.0 L952.6 673.4 L953.2 674.8 L953.9 676.2 L954.6 677.6 L955.3 679.0 L956.0 680.4 L956.7 681.7 L957.5 683.1 L958.2 684.5 L959.0 685.9 L959.8 687.3 L960.6 688.6 L961.4 690.0 L962.2 691.3 L963.1 692.7 L963.9 694.0 L964.8 695.3 L965.7 696.7 L966.5 698.0 L967.4 699.3 L968.3 700.6 L969.3 701.8 L970.2 703.1 L971.1 704.4 L972.1 705.6 L973.0 706.9 L974.0 708.1 L975.0 709.3 L975.9 710.5 L976.9 711.7 L977.9 712.9 L978.9 714.1 L980.0 715.2 L981.0 716.4 L982.0 717.5 L983.0 718.6 L984.1 719.7 L985.1 720.8 L986.2 721.8 L987.2 722.9 L988.3 723.9 L989.4 724.9 L990.4 725.9 L991.5 726.9 L992.6 727.8 L993.7 728.8 L994.7 729.7 L995.8 730.6 L996.9 731.5 L998.0 732.4 L999.1 733.2 L1000.2 734.0 L1001.3 734.8 L1002.4 735.6 L1003.5 736.4 L1004.6 737.1 L1005.7 737.9 L1006.8 738.6 L1007.9 739.3 L1008.9 739.9 L1010.0 740.6 L1011.1 741.2 L1012.2 741.8 L1013.3 742.3 L1014.4 742.9 L1015.4 743.4 L1016.5 743.9 L1017.6 744.4 L1018.6 744.9 L1019.7 745.3 L1020.7 745.7 L1021.8 746.1 L1022.8 746.5 L1023.9 746.8 L1024.9 747.1 L1025.9 747.4 L1026.9 747.7 L1027.9 747.9 L1028.9 748.2 L1029.9 748.4 L1030.9 748.5 L1031.9 748.7 L1032.9 748.8 L1033.8 748.9 L1034.8 749.0 L1035.7 749.0 L1036.6 749.1 L1037.6 749.1 L1038.5 749.0 L1039.4 749.0 L1040.3 748.9 L1041.1 748.8 L1042.0 748.7 L1042.9 748.6 L1043.7 748.4 L1044.5 748.2 L1045.3 748.0 L1046.1 747.7 L1046.9 747.5 L1047.7 747.2 L1048.5 746.9 L1049.2 746.5 L1049.9 746.2 L1050.7 745.8 L1051.4 745.4 L1052.1 745.0Z" stroke="#0fe4ea" stroke-width="1.15"/><path d="M978.1 902.0 L977.5 899.0 L977.0 896.1 L976.4 893.2 L975.8 890.3 L975.3 887.5 L974.7 884.6 L974.2 881.8 L973.6 878.9 L973.1 876.1 L972.5 873.3 L972.0 870.5 L971.5 867.7 L971.0 865.0 L970.4 862.2 L969.9 859.5 L969.4 856.7 L968.9 854.0 L968.4 851.3 L967.9 848.6 L967.4 846.0 L967.0 843.3 L966.5 840.6 L966.0 838.0 L965.5 835.4 L965.1 832.8 L964.6 830.2 L964.2 827.6 L963.7 825.1 L963.3 822.5 L962.8 820.0 L962.4 817.4 L962.0 814.9 L961.6 812.4 L961.1 809.9 L960.7 807.5 L960.3 805.0 L959.9 802.6 L959.5 800.1 L959.1 797.7 L958.7 795.3 L958.3 792.9 L958.0 790.5 L957.6 788.2 L957.2 785.8 L956.9 783.5 L956.5 781.1 L956.1 778.8 L955.8 776.5 L955.5 774.2 L955.1 772.0 L954.8 769.7 L954.5 767.5 L954.1 765.2 L953.8 763.0 L953.5 760.8 L953.2 758.6 L952.9 756.4 L952.6 754.3 L952.3 752.1 L952.0 750.0 L951.7 747.9 L951.4 745.7 L951.1 743.6 L950.9 741.6 L950.6 739.5 L950.4 737.4 L950.1 735.4 L949.8 733.4 L949.6 731.3 L949.4 729.3 L949.1 727.3 L948.9 725.4 L948.7 723.4 L948.4 721.4 L948.2 719.5 L948.0 717.6 L947.8 715.7 L947.6 713.8 L947.4 711.9 L947.2 710.0 L947.0 708.2 L946.9 706.3 L946.7 704.5 L946.5 702.7 L946.3 700.9 L946.2 699.1 L946.0 697.3 L945.9 695.5 L945.7 693.8 L945.6 692.0 L945.4 690.3 L945.3 688.6 L945.2 686.9 L945.1 685.2 L944.9 683.5 L944.8 681.9 L944.7 680.2 L944.6 678.6 L944.5 677.0 L944.4 675.4 L944.3 673.8 L944.3 672.2 L944.2 670.7 L944.1 669.1 L944.0 667.6 L944.0 666.1 L943.9 664.5 L943.9 663.0 L943.8 661.6 L943.8 660.1 L943.7 658.6 L943.7 657.2 L943.7 655.8 L943.6 654.3 L943.6 652.9 L943.6 651.5 L943.6 650.2 L943.6 648.8 L943.6 647.5 L943.6 646.1 L943.6 644.8 L943.6 643.5 L943.6 642.2 L943.7 640.9 L943.7 639.6 L943.7 638.4 L943.8 637.1 L943.8 635.9 L943.9 634.7 L943.9 633.5 L944.0 632.3 L944.0 631.1 L944.1 630.0 L944.2 628.8 L944.3 627.7 L944.4 626.5 L944.4 625.4 L944.5 624.3 L944.6 623.3 L944.7 622.2 L944.8 621.1 L945.0 620.1 L945.1 619.1 L945.2 618.0 L945.3 617.0 L945.5 616.1 L945.6 615.1 L945.7 614.1 L945.9 613.2 L946.0 612.2 L946.2 611.3 L946.4 610.4 L946.5 609.5 L946.7 608.6 L946.9 607.8 L947.1 606.9 L947.3 606.1 L947.5 605.2 L947.6 604.4 L947.9 603.6 L948.1 602.8 L948.3 602.0 L948.5 601.3 L948.7 600.5 L948.9 599.8 L949.2 599.1 L949.4 598.4 L949.6 597.7 L949.9 597.0 L950.1 596.3 L950.4 595.7 L950.7 595.0 L950.9 594.4 L951.2 593.8 L951.5 593.2 L951.8 592.6 L952.0 592.0 L952.3 591.5 L952.6 590.9 L952.9 590.4 L953.2 589.9 L953.6 589.3 L953.9 588.8 L954.2 588.4 L954.5 587.9 L954.8 587.4 L955.2 587.0 L955.5 586.6 L955.9 586.2 L956.2 585.8 L956.6 585.4 L956.9 585.0 L957.3 584.6 L957.7 584.3 L958.0 584.0 L958.4 583.6 L958.8 583.3 L959.2 583.0 L959.6 582.7 L960.0 582.5 L960.4 582.2 L960.8 582.0 L961.2 581.8 L961.6 581.5 L962.1 581.3 L962.5 581.2 L962.9 581.0 L963.4 580.8 L963.8 580.7 L964.3 580.5 L964.7 580.4 L965.2 580.3 L965.6 580.2 L966.1 580.1 L966.6 580.1 L967.1 580.0 L967.5 580.0 L968.0 580.0 L968.5 579.9 L969.0 579.9 L969.5 580.0 L970.0 580.0 L970.5 580.0 L971.1 580.1 L971.6 580.1 L972.1 580.2 L972.6 580.3 L973.2 580.4 L973.7 580.5 L974.3 580.7 L974.8 580.8 L975.4 581.0 L975.9 581.1 L976.5 581.3 L977.1 581.5 L977.7 581.8 L978.2 582.0 L978.8 582.2 L979.4 582.5 L980.0 582.7 L980.6 583.0 L981.2 583.3 L981.8 583.6 L982.5 583.9 L983.1 584.3 L983.7 584.6 L984.3 585.0 L985.0 585.4 L985.6 585.7 L986.3 586.1 L986.9 586.6 L987.6 587.0 L988.2 587.4 L988.9 587.9 L989.6 588.3 L990.2 588.8 L990.9 589.3 L991.6 589.8 L992.3 590.4 L993.0 590.9 L993.7 591.4 L994.4 592.0 L995.1 592.6 L995.8 593.2 L996.5 593.8 L997.3 594.4 L998.0 595.0 L998.7 595.6 L999.5 596.3 L1000.2 597.0 L1001.0 597.6 L1001.7 598.3 L1002.5 599.0 L1003.2 599.8 L1004.0 600.5 L1004.8 601.3 L1005.6 602.0 L1006.3 602.8 L1007.1 603.6 L1007.9 604.4 L1008.7 605.2 L1009.5 606.0 L1010.3 606.9 L1011.2 607.7 L1012.0 608.6 L1012.8 609.5 L1013.6 610.4 L1014.5 611.3 L1015.3 612.2 L1016.1 613.1 L1017.0 614.1 L1017.8 615.0 L1018.7 616.0 L1019.6 617.0 L1020.4 618.0 L1021.3 619.0 L1022.2 620.1 L1023.1 621.1 L1023.9 622.2 L1024.8 623.2 L1025.7 624.3 L1026.6 625.4 L1027.5 626.5 L1028.5 627.6 L1029.4 628.8 L1030.3 629.9 L1031.2 631.1 L1032.2 632.3 L1033.1 633.4 L1034.0 634.6 L1035.0 635.9 L1035.9 637.1 L1036.9 638.3 L1037.9 639.6 L1038.8 640.9 L1039.8 642.1 L1040.8 643.4 L1041.7 644.7 L1042.7 646.1 L1043.7 647.4 L1044.7 648.8 L1045.7 650.1 L1046.7 651.5 L1047.7 652.9 L1048.8 654.3 L1049.8 655.7 L1050.8 657.1 L1051.8 658.6 L1052.9 660.0 L1053.9 661.5 L1054.9 663.0 L1056.0 664.5 L1057.1 666.0 L1058.1 667.5 L1059.2 669.1 L1060.2 670.6 L1061.3 672.2 L1062.4 673.7 L1063.5 675.3 L1064.6 676.9 L1065.7 678.6 L1066.8 680.2 L1067.9 681.8 L1069.0 683.5 L1070.1 685.2 L1071.2 686.8 L1072.3 688.5 L1073.5 690.2 L1074.6 692.0 L1075.7 693.7 L1076.9 695.5 L1078.0 697.2 L1079.2 699.0 L1080.3 700.8 L1081.5 702.6 L1082.7 704.4 L1083.9 706.2 L1085.0 708.1 L1086.2 709.9 L1087.4 711.8 L1088.6 713.7 L1089.8 715.6 L1091.0 717.5 L1092.2 719.4 L1093.4 721.4 L1094.6 723.3 L1095.9 725.3 L1097.1 727.3 L1098.3 729.3 L1099.6 731.3 L1100.8 733.3 L1102.0 735.3 L1103.3 737.4 L1104.6 739.4 L1105.8 741.5 L1107.1 743.6 L1108.4 745.7 L1109.6 747.8 L1110.9 749.9 L1112.2 752.0 L1113.5 754.2 L1114.8 756.4 L1116.1 758.5 L1117.4 760.7 L1118.7 762.9 L1120.0 765.2 L1121.3 767.4 L1122.7 769.6 L1124.0 771.9 L1125.3 774.2 L1126.7 776.4 L1128.0 778.7 L1129.4 781.1 L1130.7 783.4 L1132.1 785.7 L1133.5 788.1 L1134.8 790.4 L1136.2 792.8 L1137.6 795.2 L1139.0 797.6Z" stroke="#00f400" stroke-width="1.15"/><path d="M913.2 893.4 L913.7 891.9 L914.2 890.4 L914.7 888.8 L915.2 887.3 L915.7 885.8 L916.2 884.3 L916.7 882.8 L917.2 881.3 L917.8 879.8 L918.3 878.3 L918.8 876.8 L919.3 875.3 L919.8 873.8 L920.3 872.3 L920.8 870.8 L921.3 869.3 L921.9 867.8 L922.4 866.3 L922.9 864.8 L923.4 863.3 L923.9 861.8 L924.4 860.3 L924.9 858.8 L925.4 857.3 L926.0 855.8 L926.5 854.4 L927.0 852.9 L927.5 851.4 L928.0 849.9 L928.5 848.4 L929.0 846.9 L929.5 845.4 L930.1 843.9 L930.6 842.4 L931.1 841.0 L931.6 839.5 L932.1 838.0 L932.6 836.5 L933.1 835.0 L933.6 833.5 L934.1 832.1 L934.7 830.6 L935.2 829.1 L935.7 827.6 L936.2 826.2 L936.7 824.7 L937.2 823.2 L937.7 821.7 L938.2 820.3 L938.8 818.8 L939.3 817.3 L939.8 815.9 L940.3 814.4 L940.8 812.9 L941.3 811.5 L941.8 810.0 L942.3 808.5 L942.9 807.1 L943.4 805.6 L943.9 804.2 L944.4 802.7 L944.9 801.3 L945.4 799.8 L945.9 798.4 L946.4 796.9 L947.0 795.5 L947.5 794.0 L948.0 792.6 L948.5 791.1 L949.0 789.7 L949.5 788.2 L950.0 786.8 L950.5 785.4 L951.0 783.9 L951.6 782.5 L952.1 781.1 L952.6 779.6 L953.1 778.2 L953.6 776.8 L954.1 775.3 L954.6 773.9 L955.1 772.5 L955.7 771.1 L956.2 769.7 L956.7 768.2 L957.2 766.8 L957.7 765.4 L958.2 764.0 L958.7 762.6 L959.2 761.2 L959.8 759.8 L960.3 758.4 L960.8 757.0 L961.3 755.6 L961.8 754.2 L962.3 752.8 L962.8 751.4 L963.3 750.1 L963.8 748.7 L964.4 747.3 L964.9 745.9 L965.4 744.6 L965.9 743.2 L966.4 741.8 L966.9 740.5 L967.4 739.1 L967.9 737.7 L968.5 736.4 L969.0 735.0 L969.5 733.7 L970.0 732.4 L970.5 731.0 L971.0 729.7 L971.5 728.4 L972.0 727.0 L972.6 725.7 L973.1 724.4 L973.6 723.1 L974.1 721.8 L974.6 720.5 L975.1 719.2 L975.6 717.9 L976.1 716.6 L976.7 715.3 L977.2 714.0 L977.7 712.8 L978.2 711.5 L978.7 710.2 L979.2 709.0 L979.7 707.7 L980.2 706.5 L980.7 705.2 L981.3 704.0 L981.8 702.8 L982.3 701.5 L982.8 700.3 L983.3 699.1 L983.8 697.9 L984.3 696.7 L984.8 695.5 L985.4 694.4 L985.9 693.2 L986.4 692.0 L986.9 690.9 L987.4 689.7 L987.9 688.6 L988.4 687.4 L988.9 686.3 L989.5 685.2 L990.0 684.1 L990.5 683.0 L991.0 681.9 L991.5 680.8 L992.0 679.8 L992.5 678.7 L993.0 677.7 L993.5 676.7 L994.1 675.6 L994.6 674.6 L995.1 673.6 L995.6 672.6 L996.1 671.7 L996.6 670.7 L997.1 669.7 L997.6 668.8 L998.2 667.9 L998.7 667.0 L999.2 666.1 L999.7 665.2 L1000.2 664.3 L1000.7 663.5 L1001.2 662.6 L1001.7 661.8 L1002.3 661.0 L1002.8 660.2 L1003.3 659.4 L1003.8 658.6 L1004.3 657.9 L1004.8 657.2 L1005.3 656.4 L1005.8 655.7 L1006.4 655.1 L1006.9 654.4 L1007.4 653.8 L1007.9 653.1 L1008.4 652.5 L1008.9 651.9 L1009.4 651.4 L1009.9 650.8 L1010.4 650.3 L1011.0 649.8 L1011.5 649.3 L1012.0 648.8 L1012.5 648.3 L1013.0 647.9 L1013.5 647.5 L1014.0 647.1 L1014.5 646.7 L1015.1 646.3 L1015.6 646.0 L1016.1 645.7 L1016.6 645.3 L1017.1 645.1 L1017.6 644.8 L1018.1 644.6 L1018.6 644.3 L1019.2 644.1 L1019.7 643.9 L1020.2 643.8 L1020.7 643.6 L1021.2 643.5 L1021.7 643.4 L1022.2 643.3 L1022.7 643.2 L1023.2 643.2 L1023.8 643.1 L1024.3 643.1 L1024.8 643.1 L1025.3 643.1 L1025.8 643.2 L1026.3 643.2 L1026.8 643.3 L1027.3 643.4 L1027.9 643.5 L1028.4 643.6 L1028.9 643.7 L1029.4 643.8 L1029.9 644.0 L1030.4 644.2 L1030.9 644.4 L1031.4 644.6 L1032.0 644.8 L1032.5 645.0 L1033.0 645.3 L1033.5 645.5 L1034.0 645.8 L1034.5 646.1 L1035.0 646.4 L1035.5 646.7 L1036.1 647.0 L1036.6 647.4 L1037.1 647.7 L1037.6 648.1 L1038.1 648.4 L1038.6 648.8 L1039.1 649.2 L1039.6 649.6 L1040.1 650.0 L1040.7 650.5 L1041.2 650.9 L1041.7 651.3 L1042.2 651.8 L1042.7 652.2 L1043.2 652.7 L1043.7 653.2 L1044.2 653.7 L1044.8 654.1 L1045.3 654.6 L1045.8 655.2 L1046.3 655.7 L1046.8 656.2 L1047.3 656.7 L1047.8 657.3 L1048.3 657.8 L1048.9 658.4 L1049.4 658.9 L1049.9 659.5 L1050.4 660.0 L1050.9 660.6 L1051.4 661.2 L1051.9 661.8 L1052.4 662.4 L1052.9 663.0 L1053.5 663.6 L1054.0 664.2 L1054.5 664.8 L1055.0 665.4 L1055.5 666.1 L1056.0 666.7 L1056.5 667.3 L1057.0 668.0 L1057.6 668.6 L1058.1 669.2 L1058.6 669.9 L1059.1 670.6 L1059.6 671.2 L1060.1 671.9 L1060.6 672.6 L1061.1 673.2 L1061.7 673.9 L1062.2 674.6 L1062.7 675.3 L1063.2 676.0 L1063.7 676.6 L1064.2 677.3 L1064.7 678.0 L1065.2 678.7 L1065.8 679.4 L1066.3 680.1 L1066.8 680.9 L1067.3 681.6 L1067.8 682.3 L1068.3 683.0 L1068.8 683.7 L1069.3 684.5 L1069.8 685.2 L1070.4 685.9 L1070.9 686.6 L1071.4 687.4 L1071.9 688.1 L1072.4 688.9 L1072.9 689.6 L1073.4 690.3 L1073.9 691.1 L1074.5 691.8 L1075.0 692.6 L1075.5 693.3 L1076.0 694.1 L1076.5 694.8 L1077.0 695.6 L1077.5 696.4 L1078.0 697.1 L1078.6 697.9 L1079.1 698.7 L1079.6 699.4 L1080.1 700.2 L1080.6 701.0 L1081.1 701.7 L1081.6 702.5 L1082.1 703.3 L1082.6 704.1 L1083.2 704.9 L1083.7 705.6 L1084.2 706.4 L1084.7 707.2 L1085.2 708.0 L1085.7 708.8 L1086.2 709.6 L1086.7 710.4 L1087.3 711.1 L1087.8 711.9 L1088.3 712.7 L1088.8 713.5 L1089.3 714.3 L1089.8 715.1 L1090.3 715.9 L1090.8 716.7 L1091.4 717.5 L1091.9 718.3 L1092.4 719.1 L1092.9 719.9 L1093.4 720.7 L1093.9 721.6 L1094.4 722.4 L1094.9 723.2 L1095.5 724.0 L1096.0 724.8 L1096.5 725.6 L1097.0 726.4 L1097.5 727.2 L1098.0 728.1 L1098.5 728.9 L1099.0 729.7 L1099.5 730.5 L1100.1 731.3 L1100.6 732.1 L1101.1 733.0 L1101.6 733.8 L1102.1 734.6 L1102.6 735.4 L1103.1 736.3 L1103.6 737.1 L1104.2 737.9 L1104.7 738.7 L1105.2 739.6 L1105.7 740.4 L1106.2 741.2 L1106.7 742.1 L1107.2 742.9 L1107.7 743.7 L1108.3 744.5 L1108.8 745.4 L1109.3 746.2 L1109.8 747.0 L1110.3 747.9 L1110.8 748.7 L1111.3 749.6 L1111.8 750.4 L1112.4 751.2 L1112.9 752.1 L1113.4 752.9 L1113.9 753.7 L1114.4 754.6 L1114.9 755.4 L1115.4 756.3 L1115.9 757.1 L1116.4 757.9 L1117.0 758.8 L1117.5 759.6 L1118.0 760.5Z" stroke="#e600e6" stroke-width="1.15"/><path d="M913.2 376.4 L913.7 377.2 L914.2 378.1 L914.7 378.9 L915.2 379.7 L915.7 380.6 L916.2 381.4 L916.7 382.3 L917.2 383.1 L917.8 383.9 L918.3 384.8 L918.8 385.6 L919.3 386.5 L919.8 387.3 L920.3 388.1 L920.8 389.0 L921.3 389.8 L921.9 390.6 L922.4 391.5 L922.9 392.3 L923.4 393.1 L923.9 394.0 L924.4 394.8 L924.9 395.6 L925.4 396.5 L926.0 397.3 L926.5 398.1 L927.0 398.9 L927.5 399.8 L928.0 400.6 L928.5 401.4 L929.0 402.2 L929.5 403.1 L930.1 403.9 L930.6 404.7 L931.1 405.5 L931.6 406.3 L932.1 407.2 L932.6 408.0 L933.1 408.8 L933.6 409.6 L934.1 410.4 L934.7 411.2 L935.2 412.1 L935.7 412.9 L936.2 413.7 L936.7 414.5 L937.2 415.3 L937.7 416.1 L938.2 416.9 L938.8 417.7 L939.3 418.5 L939.8 419.3 L940.3 420.1 L940.8 420.9 L941.3 421.7 L941.8 422.5 L942.3 423.3 L942.9 424.1 L943.4 424.9 L943.9 425.7 L944.4 426.5 L944.9 427.3 L945.4 428.1 L945.9 428.9 L946.4 429.7 L947.0 430.4 L947.5 431.2 L948.0 432.0 L948.5 432.8 L949.0 433.6 L949.5 434.3 L950.0 435.1 L950.5 435.9 L951.0 436.7 L951.6 437.4 L952.1 438.2 L952.6 439.0 L953.1 439.7 L953.6 440.5 L954.1 441.2 L954.6 442.0 L955.1 442.8 L955.7 443.5 L956.2 444.3 L956.7 445.0 L957.2 445.8 L957.7 446.5 L958.2 447.3 L958.7 448.0 L959.2 448.7 L959.8 449.5 L960.3 450.2 L960.8 450.9 L961.3 451.7 L961.8 452.4 L962.3 453.1 L962.8 453.8 L963.3 454.6 L963.8 455.3 L964.4 456.0 L964.9 456.7 L965.4 457.4 L965.9 458.1 L966.4 458.8 L966.9 459.5 L967.4 460.2 L967.9 460.9 L968.5 461.6 L969.0 462.3 L969.5 462.9 L970.0 463.6 L970.5 464.3 L971.0 465.0 L971.5 465.6 L972.0 466.3 L972.6 467.0 L973.1 467.6 L973.6 468.3 L974.1 468.9 L974.6 469.5 L975.1 470.2 L975.6 470.8 L976.1 471.4 L976.7 472.0 L977.2 472.7 L977.7 473.3 L978.2 473.9 L978.7 474.5 L979.2 475.1 L979.7 475.7 L980.2 476.2 L980.7 476.8 L981.3 477.4 L981.8 477.9 L982.3 478.5 L982.8 479.1 L983.3 479.6 L983.8 480.1 L984.3 480.7 L984.8 481.2 L985.4 481.7 L985.9 482.2 L986.4 482.7 L986.9 483.2 L987.4 483.7 L987.9 484.2 L988.4 484.6 L988.9 485.1 L989.5 485.5 L990.0 486.0 L990.5 486.4 L991.0 486.8 L991.5 487.2 L992.0 487.6 L992.5 488.0 L993.0 488.4 L993.5 488.8 L994.1 489.1 L994.6 489.5 L995.1 489.8 L995.6 490.1 L996.1 490.4 L996.6 490.7 L997.1 491.0 L997.6 491.3 L998.2 491.6 L998.7 491.8 L999.2 492.0 L999.7 492.3 L1000.2 492.5 L1000.7 492.7 L1001.2 492.8 L1001.7 493.0 L1002.3 493.2 L1002.8 493.3 L1003.3 493.4 L1003.8 493.5 L1004.3 493.6 L1004.8 493.6 L1005.3 493.7 L1005.8 493.7 L1006.4 493.7 L1006.9 493.7 L1007.4 493.7 L1007.9 493.7 L1008.4 493.6 L1008.9 493.6 L1009.4 493.5 L1009.9 493.4 L1010.4 493.2 L1011.0 493.1 L1011.5 492.9 L1012.0 492.7 L1012.5 492.5 L1013.0 492.3 L1013.5 492.0 L1014.0 491.8 L1014.5 491.5 L1015.1 491.2 L1015.6 490.9 L1016.1 490.5 L1016.6 490.2 L1017.1 489.8 L1017.6 489.4 L1018.1 489.0 L1018.6 488.5 L1019.2 488.1 L1019.7 487.6 L1020.2 487.1 L1020.7 486.6 L1021.2 486.0 L1021.7 485.5 L1022.2 484.9 L1022.7 484.3 L1023.2 483.7 L1023.8 483.1 L1024.3 482.4 L1024.8 481.8 L1025.3 481.1 L1025.8 480.4 L1026.3 479.7 L1026.8 479.0 L1027.3 478.2 L1027.9 477.5 L1028.4 476.7 L1028.9 475.9 L1029.4 475.1 L1029.9 474.2 L1030.4 473.4 L1030.9 472.5 L1031.4 471.7 L1032.0 470.8 L1032.5 469.9 L1033.0 469.0 L1033.5 468.1 L1034.0 467.1 L1034.5 466.2 L1035.0 465.2 L1035.5 464.2 L1036.1 463.2 L1036.6 462.2 L1037.1 461.2 L1037.6 460.2 L1038.1 459.2 L1038.6 458.1 L1039.1 457.1 L1039.6 456.0 L1040.1 454.9 L1040.7 453.8 L1041.2 452.7 L1041.7 451.6 L1042.2 450.5 L1042.7 449.4 L1043.2 448.3 L1043.7 447.1 L1044.2 446.0 L1044.8 444.8 L1045.3 443.7 L1045.8 442.5 L1046.3 441.3 L1046.8 440.1 L1047.3 438.9 L1047.8 437.7 L1048.3 436.5 L1048.9 435.3 L1049.4 434.1 L1049.9 432.9 L1050.4 431.6 L1050.9 430.4 L1051.4 429.1 L1051.9 427.9 L1052.4 426.6 L1052.9 425.4 L1053.5 424.1 L1054.0 422.8 L1054.5 421.5 L1055.0 420.3 L1055.5 419.0 L1056.0 417.7 L1056.5 416.4 L1057.0 415.1 L1057.6 413.8 L1058.1 412.5 L1058.6 411.1 L1059.1 409.8 L1059.6 408.5 L1060.1 407.2 L1060.6 405.8 L1061.1 404.5 L1061.7 403.1 L1062.2 401.8 L1062.7 400.5 L1063.2 399.1 L1063.7 397.7 L1064.2 396.4 L1064.7 395.0 L1065.2 393.7 L1065.8 392.3 L1066.3 390.9 L1066.8 389.5 L1067.3 388.2 L1067.8 386.8 L1068.3 385.4 L1068.8 384.0 L1069.3 382.6 L1069.8 381.2 L1070.4 379.8 L1070.9 378.5 L1071.4 377.1 L1071.9 375.7 L1072.4 374.2 L1072.9 372.8 L1073.4 371.4 L1073.9 370.0 L1074.5 368.6 L1075.0 367.2 L1075.5 365.8 L1076.0 364.4 L1076.5 362.9 L1077.0 361.5 L1077.5 360.1 L1078.0 358.7 L1078.6 357.2 L1079.1 355.8 L1079.6 354.4 L1080.1 352.9 L1080.6 351.5 L1081.1 350.1 L1081.6 348.6 L1082.1 347.2 L1082.6 345.7 L1083.2 344.3 L1083.7 342.8 L1084.2 341.4 L1084.7 339.9 L1085.2 338.5 L1085.7 337.0 L1086.2 335.6 L1086.7 334.1 L1087.3 332.7 L1087.8 331.2 L1088.3 329.8 L1088.8 328.3 L1089.3 326.8 L1089.8 325.4 L1090.3 323.9 L1090.8 322.5 L1091.4 321.0 L1091.9 319.5 L1092.4 318.0 L1092.9 316.6 L1093.4 315.1 L1093.9 313.6 L1094.4 312.2 L1094.9 310.7 L1095.5 309.2 L1096.0 307.7 L1096.5 306.3 L1097.0 304.8 L1097.5 303.3 L1098.0 301.8 L1098.5 300.3 L1099.0 298.9 L1099.5 297.4 L1100.1 295.9 L1100.6 294.4 L1101.1 292.9 L1101.6 291.4 L1102.1 289.9 L1102.6 288.5 L1103.1 287.0 L1103.6 285.5 L1104.2 284.0 L1104.7 282.5 L1105.2 281.0 L1105.7 279.5 L1106.2 278.0 L1106.7 276.5 L1107.2 275.0 L1107.7 273.5 L1108.3 272.0 L1108.8 270.5 L1109.3 269.0 L1109.8 267.5 L1110.3 266.0 L1110.8 264.5 L1111.3 263.0 L1111.8 261.5 L1112.4 260.0 L1112.9 258.5 L1113.4 257.0 L1113.9 255.5 L1114.4 254.0 L1114.9 252.5 L1115.4 251.0 L1115.9 249.5 L1116.4 248.0 L1117.0 246.5 L1117.5 245.0 L1118.0 243.5Z" stroke="#e600e6" stroke-width="1.15"/><g stroke="#d0d0d0" stroke-width="1.200"><path d="M980.200 807.600 V757.100 M980.200 807.600 L1020.900 781.400 M980.200 807.600 L1025.900 832.700"/><path d="M972.400 808.200 L980 804.100 L987.900 807.600 L980.800 812.400Z"/><path d="M985.100 741.400 H998.800 L985.100 755.900 H998.800"/><path d="M1022.900 762.900 L1030 770 L1037.100 762.400 M1030 770 V777.100"/><path d="M1031.200 816.700 L1045.500 830.900 M1044.700 816.700 L1030.400 830.900"/></g></g><g stroke-width="1.200" fill="none"><path d="M1492.500 588 V675.800" stroke="#5b9bd5"/><path d="M1468 661.500 L1540.700 615" stroke="#7dc242"/><path d="M1466 632.300 L1545.800 674.800" stroke="#c9714f"/><rect x="1489.400" y="643.400" width="6.200" height="6.200" fill="#000" stroke="#f4f4f4" stroke-width="1.100"/></g></svg>
<svg class="b" style="left:0px;top:0px;" width="1916" height="1020" viewBox="0 0 1916 1020"><path fill-rule="evenodd" fill="#2d2d2d" d="M1765.500 366.300 A63.800 39.500 0 1 0 1893.100 366.300 A63.800 39.500 0 1 0 1765.500 366.300Z M1779.100 366.200 A50.200 28.200 0 1 1 1879.600 366.200 A50.200 28.200 0 1 1 1779.100 366.200Z"/><text x="0" y="0" transform="translate(1786.5 340.5) rotate(-22) skewX(-18) scale(1.25 1)" text-anchor="middle" font-family="Liberation Sans, sans-serif" font-weight="bold" font-size="14.5" fill="#9c9c9c" stroke="#9c9c9c" stroke-width="0.500">W</text><text x="0" y="0" transform="translate(1868.2 339.5) rotate(22) skewX(18) scale(1.25 1)" text-anchor="middle" font-family="Liberation Sans, sans-serif" font-weight="bold" font-size="14.5" fill="#9c9c9c" stroke="#9c9c9c" stroke-width="0.500">N</text><text x="0" y="0" transform="translate(1785 395.6) rotate(-16) skewX(-14) scale(1.3 1)" text-anchor="middle" font-family="Liberation Sans, sans-serif" font-weight="bold" font-size="17.5" fill="#9c9c9c" stroke="#9c9c9c" stroke-width="0.500">S</text><text x="0" y="0" transform="translate(1877 393.5) rotate(-27) skewX(20) scale(1.3 1)" text-anchor="middle" font-family="Liberation Sans, sans-serif" font-weight="bold" font-size="17.5" fill="#9c9c9c" stroke="#9c9c9c" stroke-width="0.500">E</text><defs><radialGradient id="cs"><stop offset="0.600" stop-color="#000"/><stop offset="1" stop-color="#000" stop-opacity="0"/></radialGradient><linearGradient id="cf" x1="0" y1="0" x2="0" y2="1"><stop offset="0" stop-color="#b6b6b6"/><stop offset="1" stop-color="#9a9a9a"/></linearGradient><linearGradient id="cr" x1="0" y1="0" x2="0" y2="1"><stop offset="0" stop-color="#ababab"/><stop offset="1" stop-color="#8e8e8e"/></linearGradient></defs><ellipse cx="1829" cy="364" rx="40" ry="21" fill="url(#cs)"/><path d="M1827.500 299.400 L1863.900 315.900 L1830.600 335.800 L1793.300 317.900Z" fill="#b1b1b1"/><path d="M1793.300 317.900 L1830.600 335.800 V377.600 L1796.100 355.900Z" fill="url(#cf)"/><path d="M1830.600 335.800 L1863.900 315.900 L1861.200 354.400 L1830.600 377.600Z" fill="url(#cr)"/><path d="M1830.600 337 V377" stroke="#6e6e72" stroke-width="0.900" stroke-dasharray="7 3"/><path d="M1794 318.300 L1830.600 335.800 L1863.500 316.200" stroke="#77777b" stroke-width="0.800" stroke-dasharray="6 4" fill="none"/><path d="M1830.600 329.800 L1836.800 333.200 V340.500 L1830.600 344.500 L1824.400 340.500 V333.200Z" fill="#aab0ba" opacity="0.800"/><text transform="matrix(0.880 0.330 -0.700 0.520 1819.500 314.500)" font-family="Liberation Sans, sans-serif" font-weight="bold" font-size="8.800" fill="#55555b" stroke="#55555b" stroke-width="0.350">TOP</text><text transform="matrix(0.820 0.400 0 1 1800.300 343.500)" font-family="Liberation Sans, sans-serif" font-weight="bold" font-size="9.200" fill="#55555b" stroke="#55555b" stroke-width="0.350" letter-spacing="-0.200">FRONT</text><text transform="matrix(0.800 -0.480 0 1 1837.500 356.500)" font-family="Liberation Sans, sans-serif" font-weight="bold" font-size="9.200" fill="#55555b" stroke="#55555b" stroke-width="0.350" letter-spacing="-0.200">RIGHT</text><rect x="1800.300" y="426.400" width="55.200" height="19.200" rx="4" fill="#80808e" stroke="#8e8e9c" stroke-width="0.800"/><text x="1804.700" y="440" font-family="Liberation Sans, sans-serif" font-size="11.800" fill="#5b5b66" textLength="28.800" lengthAdjust="spacingAndGlyphs">WCS</text><path d="M1841.500 432.800 H1850.500 L1846 437.800Z" fill="#9c9cac"/><rect x="1869" y="477" width="40" height="259" rx="4" fill="#3b3b3b"/><g fill="none" stroke="#4d4d4d" stroke-width="1.500"><circle cx="1901.500" cy="484" r="3.300" stroke-width="1"/><path d="M1899.700 482.200 L1903.300 485.800 M1903.300 482.200 L1899.700 485.800" stroke-width="0.900"/><path d="M1876 512 Q1876 500 1888 500 H1902 V512 Q1902 524 1889 524 Q1876 524 1876 512Z"/><circle cx="1889" cy="512" r="8"/><circle cx="1889" cy="509.500" r="3.500" stroke-width="1.100"/><path d="M1883 517.500 Q1889 513 1895 517.500" stroke-width="1.100"/><path d="M1873 546.500 H1907" stroke-width="0.800"/><path d="M1876 567 Q1880 564 1883 572 V556 Q1884.500 553 1886 556 V552 Q1887.500 549 1889.500 552 V553 Q1891.500 550 1893 553.500 V557 Q1895 554.500 1896.500 558 V570 Q1896 579 1888 579 Q1882 579 1876 567Z" stroke-width="1.200"/><path d="M1876 588 L1891 603 M1891 588 L1876 603" stroke-width="1.300"/><circle cx="1894" cy="604.500" r="5"/><path d="M1897.500 608.500 L1902 613" stroke-width="2.200"/><path d="M1875 587 h3 v3 h-3z M1889.500 587 h3 v3 h-3z M1875 601.500 h3 v3 h-3z" fill="#4d4d4d" stroke="none"/><path d="M1889 635 V658 M1885.500 639 L1889 634 L1892.500 639" stroke-width="1.300"/><rect x="1886.800" y="640" width="4.400" height="18" stroke-width="1"/><ellipse cx="1889" cy="649" rx="12.500" ry="4.500" stroke-width="1.300"/><path d="M1879.500 654.500 L1876.500 650.500 L1881.500 649.500" stroke-width="1.200"/><path d="M1873 680.500 H1907" stroke-width="0.800"/><rect x="1875" y="685" width="7.500" height="7.500" stroke-width="1"/><rect x="1885" y="685" width="7.500" height="7.500" stroke-width="1"/><rect x="1895" y="685" width="7.500" height="7.500" stroke-width="1"/><rect x="1875" y="696" width="19.500" height="16.500" stroke-width="1.100"/><path d="M1881 699.500 L1889.500 704.300 L1881 709Z" fill="#4d4d4d" stroke="none"/><circle cx="1901.500" cy="729" r="3.300" stroke-width="1"/><path d="M1899.500 728.500 H1903.500" stroke-width="0.900"/></g><path d="M1886 538 H1892 L1889 541Z M1886 623.500 H1892 L1889 626.500Z M1886.500 671 H1891.500 L1889 673.500Z" fill="#4d4d4d"/><path d="M1885 620.500 H1893" stroke="#4d4d4d" stroke-width="0.800"/></svg>
<div class="b" style="left:420px;top:907px;width:76px;height:34px;background:#1e232c;border-radius:4px 0 0 4px;"></div>
<div class="b" style="left:492px;top:908px;width:1004px;height:32px;background:#b4b4b4;border-radius:3px;"></div>
<svg class="b" style="left:0px;top:0px;" width="1500" height="945" viewBox="0 0 1500 945"><rect x="425.3" y="913.4" width="1.800" height="1.500" fill="#d4d4d4"/><rect x="429.1" y="913.4" width="1.800" height="1.500" fill="#d4d4d4"/><rect x="425.3" y="916.2" width="1.800" height="1.500" fill="#d4d4d4"/><rect x="429.1" y="916.2" width="1.800" height="1.500" fill="#d4d4d4"/><rect x="425.3" y="919.0" width="1.800" height="1.500" fill="#d4d4d4"/><rect x="429.1" y="919.0" width="1.800" height="1.500" fill="#d4d4d4"/><rect x="425.3" y="921.8" width="1.800" height="1.500" fill="#d4d4d4"/><rect x="429.1" y="921.8" width="1.800" height="1.500" fill="#d4d4d4"/><rect x="425.3" y="924.6" width="1.800" height="1.500" fill="#d4d4d4"/><rect x="429.1" y="924.6" width="1.800" height="1.500" fill="#d4d4d4"/><rect x="425.3" y="927.4" width="1.800" height="1.500" fill="#d4d4d4"/><rect x="429.1" y="927.4" width="1.800" height="1.500" fill="#d4d4d4"/><rect x="425.3" y="930.2" width="1.800" height="1.500" fill="#d4d4d4"/><rect x="429.1" y="930.2" width="1.800" height="1.500" fill="#d4d4d4"/><rect x="425.3" y="933.0" width="1.800" height="1.500" fill="#d4d4d4"/><rect x="429.1" y="933.0" width="1.800" height="1.500" fill="#d4d4d4"/><path d="M439.600 916.800 L449.800 927 M449.800 916.800 L439.600 927" stroke="#d4d4d4" stroke-width="2.100"/><path d="M468.300 930.400 L479 919.800" stroke="#a9a9a9" stroke-width="2.800" stroke-linecap="round"/><path d="M477.500 921.300 Q475.300 916 481 914 L480.300 918 L482.700 919.700 L485.700 917.300 Q486 923.800 479.500 922.300Z" fill="#a9a9a9"/><rect x="497.700" y="916.600" width="18.600" height="13.700" fill="#a2a2a2" stroke="#505050" stroke-width="1"/><rect x="497.700" y="916.600" width="18.600" height="3" fill="#505050"/><path d="M499.500 922.300 L503 924.300 L499.500 926.300 M503.500 926.500 H508" stroke="#505050" stroke-width="0.900" fill="none"/><path d="M519.600 922 H528.600 L524.100 926.800Z" fill="#404040"/><path d="M1481.300 927.200 H1490.700 L1486 922.200Z" fill="#3c3c3c"/></svg>
<div class="t" style="left:538.70px;top:916.06px;line-height:18px;font-size:14.8px;letter-spacing:-0.046px;color:#5e5e5e;font-weight:normal;font-style:italic;font-family:'Liberation Mono', monospace;">Type a command</div>
<div class="b" style="left:4px;top:941px;width:1908px;height:5px;background:#3b4453;"></div>
<svg class="b" style="left:0px;top:0px;" width="300" height="1000" viewBox="0 0 300 1000"><path d="M14.300 976 L25.800 946 H100.300 L88.300 976Z" fill="#3b4453"/><path d="M152.300 970.600 L159.800 951 M202.300 970.600 L209.800 951" stroke="#485062" stroke-width="1.200"/><path d="M180.800 953.600 V968.800 M173.200 961.200 H188.400" stroke="#f0f0f0" stroke-width="2.100"/></svg>
<div class="t" style="left:35.30px;top:952.87px;line-height:18px;font-size:14.8px;letter-spacing:0.189px;color:#ffffff;font-weight:bold;font-style:normal;font-family:'Liberation Sans', sans-serif;">Model</div>
<div class="t" style="left:109.30px;top:952.87px;line-height:18px;font-size:14.8px;letter-spacing:-0.016px;color:#ececec;font-weight:normal;font-style:normal;font-family:'Liberation Sans', sans-serif;">A3rd</div>
<div class="b" style="left:6px;top:983px;width:1159.3px;height:30px;background:#3b4453;"></div>
<div class="b" style="left:1170px;top:983px;width:59px;height:30px;background:#3b4453;"></div>
<div class="b" style="left:1232px;top:983px;width:79.8px;height:30px;background:#3b4453;"></div>
<div class="b" style="left:1315px;top:983px;width:29.6px;height:30px;background:#3b4453;"></div>
<div class="b" style="left:1346.1px;top:983px;width:129.4px;height:30px;background:#3b4453;"></div>
<div class="b" style="left:1477.5px;top:983px;width:79.5px;height:30px;background:#3b4453;"></div>
<div class="b" style="left:1560.4px;top:983px;width:131.7px;height:30px;background:#3b4453;"></div>
<div class="b" style="left:1695.1px;top:983px;width:49.7px;height:30px;background:#3b4453;"></div>
<div class="b" style="left:1746.2px;top:983px;width:29.8px;height:30px;background:#3b4453;"></div>
<div class="b" style="left:1779px;top:983px;width:30.7px;height:30px;background:#3b4453;"></div>
<div class="b" style="left:1813px;top:983px;width:33.8px;height:30px;background:#3b4453;"></div>
<div class="b" style="left:1850px;top:983px;width:60px;height:30px;background:#3b4453;"></div>
<div class="b" style="left:1478px;top:984px;width:27.8px;height:28px;background:#5b8fc7;"></div>
<div class="b" style="left:1507.8px;top:984px;width:28.2px;height:28px;background:#5b8fc7;"></div>
<div class="b" style="left:1560.8px;top:984px;width:28.2px;height:28px;background:#5b8fc7;"></div>
<svg class="b" style="left:0px;top:0px;" width="1916" height="1020" viewBox="0 0 1916 1020"><path d="M1241.400 988.300 V1007.400 M1246.800 988.300 V1007.400 M1252.200 988.300 V1007.400 M1237.400 992.900 H1256.200 M1237.400 997.800 H1256.200 M1237.400 1002.800 H1256.200" stroke="#e6e6e6" stroke-width="1.100"/><rect x="1269.2" y="990.2" width="2.600" height="2.600" fill="#c9c9c9"/><rect x="1269.2" y="996.2" width="2.600" height="2.600" fill="#c9c9c9"/><rect x="1269.2" y="1002.2" width="2.600" height="2.600" fill="#c9c9c9"/><rect x="1275.2" y="990.2" width="2.600" height="2.600" fill="#c9c9c9"/><rect x="1275.2" y="996.2" width="2.600" height="2.600" fill="#c9c9c9"/><rect x="1275.2" y="1002.2" width="2.600" height="2.600" fill="#c9c9c9"/><rect x="1281.2" y="990.2" width="2.600" height="2.600" fill="#c9c9c9"/><rect x="1281.2" y="996.2" width="2.600" height="2.600" fill="#c9c9c9"/><rect x="1281.2" y="1002.2" width="2.600" height="2.600" fill="#c9c9c9"/><path d="M1324.300 990.500 V999.300 M1319.900 994.900 H1328.700" stroke="#e6e6e6" stroke-width="1.200"/><rect x="1327.200" y="1000.200" width="12.700" height="5.200" fill="#e6e6e6"/><rect x="1328.500" y="1001.400" width="1.600" height="2.800" fill="#3b4453"/><path d="M1351.400 988.900 V1007.600 H1370.900 M1351.400 1002.300 H1356.800 V1007.600" stroke="#e6e6e6" stroke-width="1.100" fill="none"/><circle cx="1389.100" cy="997.800" r="7.800" stroke="#c9c9c9" stroke-width="1.100" fill="none"/><path d="M1389.100 997.800 L1397 989.900 M1389.100 997.800 H1401" stroke="#c9c9c9" stroke-width="1.100"/><path d="M1441.300 988 V1007.500" stroke="#38b56c" stroke-width="1"/><path d="M1433.200 989.500 L1448.200 1004.800" stroke="#c84646" stroke-width="1"/><rect x="1439.800" y="995.600" width="3" height="3" fill="#3b4453" stroke="#e6e6e6" stroke-width="0.800"/><path d="M1482.900 1003.800 L1496.600 990.300" stroke="#fff" stroke-width="1.200"/><path d="M1482.900 1004.600 H1502" stroke="#c5d6ea" stroke-width="1.100"/><rect x="1487.900" y="996.200" width="3.300" height="3.300" fill="#fff"/><rect x="1514.500" y="990.300" width="17" height="17.100" stroke="#fff" stroke-width="1.100" fill="none"/><rect x="1512.300" y="988.500" width="5.200" height="5" stroke="#fff" stroke-width="1" fill="#5b8fc7"/><path d="M1573.7 988.300 L1576.4 996.800 L1577.0 1000.300 L1582.6000000000001 1008 L1576.9 1005.600 L1573.7 1003 L1570.5 1005.600 L1564.8 1008 L1570.4 1000.300 L1571.0 996.800Z" fill="#fff"/><circle cx="1581.300" cy="992.600" r="2.700" fill="none" stroke="#fff" stroke-width="0.900"/><path d="M1604 988.300 L1606.7 996.800 L1607.3 1000.300 L1612.9 1008 L1607.2 1005.600 L1604 1003 L1600.8 1005.600 L1595.1 1008 L1600.7 1000.300 L1601.3 996.800Z" fill="#c9c9c9"/><path d="M1612.500 989 L1608.300 993.500 H1610.800 L1609 997.300 L1613.800 992.300 H1611.300Z" fill="#c9c9c9"/><path d="M1634.3 988.300 L1637.0 996.800 L1637.6 1000.300 L1643.2 1008 L1637.5 1005.600 L1634.3 1003 L1631.1 1005.600 L1625.3999999999999 1008 L1631.0 1000.300 L1631.6 996.800Z" fill="#c9c9c9"/><polygon points="1719.90,995.77 1719.90,999.83 1716.95,1000.06 1716.48,1001.19 1718.40,1003.44 1715.54,1006.30 1713.29,1004.38 1712.16,1004.85 1711.93,1007.80 1707.87,1007.80 1707.64,1004.85 1706.51,1004.38 1704.26,1006.30 1701.40,1003.44 1703.32,1001.19 1702.85,1000.06 1699.90,999.83 1699.90,995.77 1702.85,995.54 1703.32,994.41 1701.40,992.16 1704.26,989.30 1706.51,991.22 1707.64,990.75 1707.87,987.80 1711.93,987.80 1712.16,990.75 1713.29,991.22 1715.54,989.30 1718.40,992.16 1716.48,994.41 1716.95,995.54" fill="#dadada"/><circle cx="1709.9" cy="997.8" r="3.800" fill="#3b4453"/><path d="M1760.500 988.300 V1007.300 M1751 997.800 H1770" stroke="#e6e6e6" stroke-width="2.800"/><rect x="1784.700" y="989.100" width="7" height="6.800" stroke="#c9c9c9" stroke-width="1" fill="none"/><circle cx="1799.400" cy="996.800" r="4.200" stroke="#c9c9c9" stroke-width="1" fill="none"/><path d="M1791.800 1000.500 L1796.600 1007.500 H1787Z" stroke="#c9c9c9" stroke-width="1" fill="none"/><path d="M1817 990 L1822 985.300 H1833.500 L1838.500 990.500 V1002 L1833 1006.800 H1817Z" fill="#3f78c2"/><path d="M1817 990 L1822 985.300 H1833.500 L1838.500 990.500Z" fill="#5a94da"/><path d="M1822.500 985.500 V996.500 M1817.500 991 H1828" stroke="#e8f1fb" stroke-width="1.100"/><circle cx="1822.500" cy="991" r="2" fill="none" stroke="#e8f1fb" stroke-width="0.900"/><rect x="1817" y="999.800" width="9.500" height="7" fill="#f2b52e"/><path d="M1828.300 1003.800 L1832.300 1007.800 L1841 999.500" stroke="#36b34a" stroke-width="2.800" fill="none"/><rect x="1855.500" y="990.400" width="19" height="14.300" stroke="#c9c9c9" stroke-width="1.100" fill="#2c333f"/><path d="M1866.500 997 L1871.800 992.700 M1868.300 992.500 H1872 V996 M1863.500 998.800 L1858.300 1002.800 M1858.100 999.500 V1003 H1861.700" stroke="#c9c9c9" stroke-width="1" fill="none"/><path d="M1885 990.300 H1905 M1885 997.500 H1905 M1885 1004.800 H1905" stroke="#e6e6e6" stroke-width="2.400"/></svg>
<svg class="b" style="left:1297.4px;top:995.0px;" width="9" height="5" viewBox="0 0 9 5"><path d="M0 0H9L4.5 5Z" fill="#dadada"/></svg>
<svg class="b" style="left:1411.4px;top:995.0px;" width="9" height="5" viewBox="0 0 9 5"><path d="M0 0H9L4.5 5Z" fill="#dadada"/></svg>
<svg class="b" style="left:1461.4px;top:995.0px;" width="9" height="5" viewBox="0 0 9 5"><path d="M0 0H9L4.5 5Z" fill="#dadada"/></svg>
<svg class="b" style="left:1542.8px;top:995.0px;" width="9" height="5" viewBox="0 0 9 5"><path d="M0 0H9L4.5 5Z" fill="#dadada"/></svg>
<svg class="b" style="left:1677.7px;top:995.0px;" width="9" height="5" viewBox="0 0 9 5"><path d="M0 0H9L4.5 5Z" fill="#dadada"/></svg>
<svg class="b" style="left:1730.4px;top:995.0px;" width="9" height="5" viewBox="0 0 9 5"><path d="M0 0H9L4.5 5Z" fill="#dadada"/></svg>
<div class="t" style="left:1174.90px;top:989.60px;line-height:18px;font-size:15px;letter-spacing:-0.749px;color:#f2f2f2;font-weight:normal;font-style:normal;font-family:'Liberation Sans', sans-serif;">MODEL</div>
<div class="t" style="left:1654.6px;top:989.600px;line-height:18px;font-size:15px;color:#f2f2f2;">1</div>
<div class="t" style="left:1662.3px;top:989.600px;line-height:18px;font-size:15px;color:#f2f2f2;">:</div>
<div class="t" style="left:1666.1px;top:989.600px;line-height:18px;font-size:15px;color:#f2f2f2;">1</div>
</body></html>
